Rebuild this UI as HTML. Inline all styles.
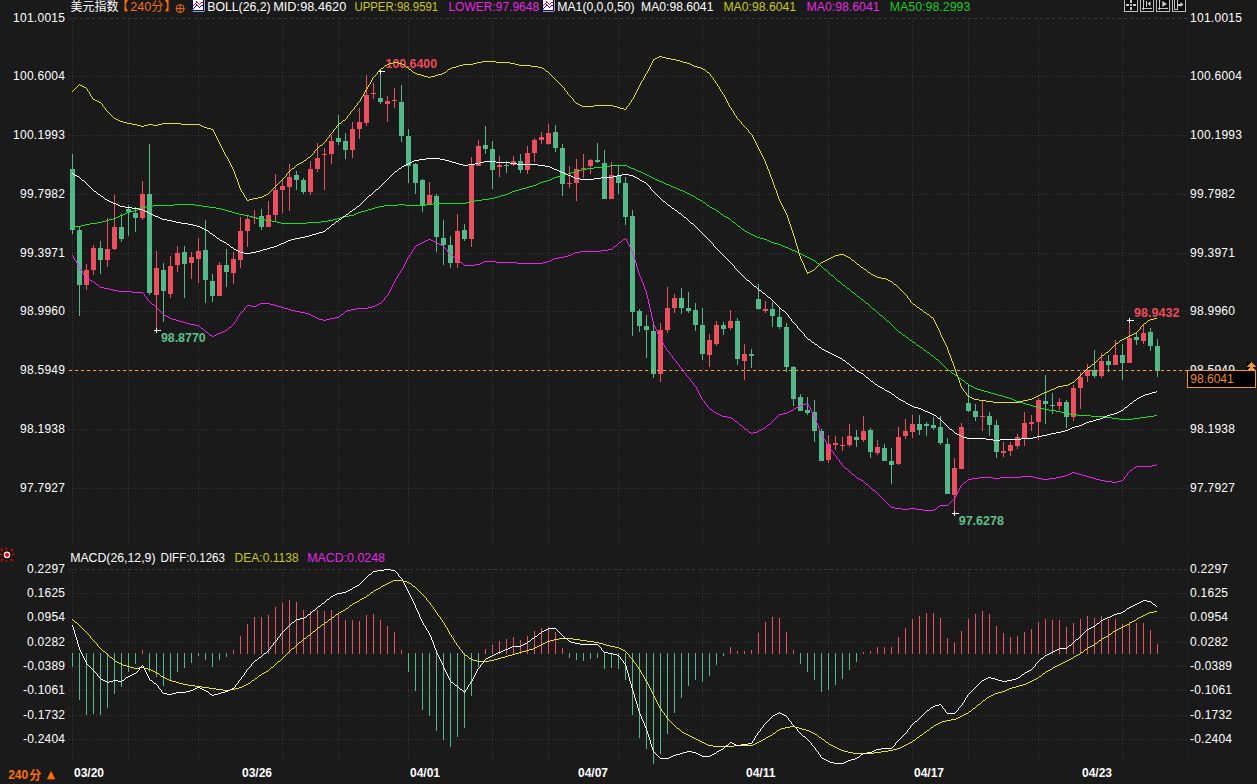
<!DOCTYPE html><html><head><meta charset="utf-8"><title>chart</title><style>html,body{margin:0;padding:0;background:#1a1a1a;overflow:hidden}svg{display:block}text{font-family:"Liberation Sans","Noto Sans CJK SC",sans-serif;font-size:12px;fill:#fff}.b{font-weight:bold}</style></head><body>
<svg width="1257" height="784" viewBox="0 0 1257 784">
<rect width="1257" height="784" fill="#1a1a1a"/>
<rect x="0" y="547" width="1257" height="1" fill="#1e1e1e"/>
<rect x="0" y="764" width="1257" height="1" fill="#1e1e1e"/>
<rect x="68" y="0" width="1" height="764" fill="#1e1e1e"/>
<rect x="1255" y="0" width="1" height="762" fill="#1e1e1e"/>
<line x1="1188.5" x2="1188.5" y1="12" y2="763" stroke="#212121" stroke-dasharray="1 2" shape-rendering="crispEdges"/>
<g stroke="#3a3a3a" stroke-width="1" shape-rendering="crispEdges" fill="none">
<line x1="69" x2="1187" y1="18.5" y2="18.5" stroke-dasharray="3 3" stroke-dashoffset="1"/>
<line x1="69" x2="1187" y1="76.5" y2="76.5" stroke-dasharray="1 2"/>
<line x1="69" x2="1187" y1="135.5" y2="135.5" stroke-dasharray="1 2"/>
<line x1="69" x2="1187" y1="194.5" y2="194.5" stroke-dasharray="1 2"/>
<line x1="69" x2="1187" y1="253.5" y2="253.5" stroke-dasharray="1 2"/>
<line x1="69" x2="1187" y1="311.5" y2="311.5" stroke-dasharray="1 2"/>
<line x1="69" x2="1187" y1="370.5" y2="370.5" stroke-dasharray="1 2"/>
<line x1="69" x2="1187" y1="429.5" y2="429.5" stroke-dasharray="1 2"/>
<line x1="69" x2="1187" y1="488.5" y2="488.5" stroke-dasharray="1 2"/>
<line x1="69" x2="1187" y1="569.5" y2="569.5" stroke-dasharray="3 3" stroke-dashoffset="1"/>
<line x1="69" x2="1187" y1="593.5" y2="593.5" stroke-dasharray="1 2"/>
<line x1="69" x2="1187" y1="617.5" y2="617.5" stroke-dasharray="1 2"/>
<line x1="69" x2="1187" y1="642.5" y2="642.5" stroke-dasharray="1 2"/>
<line x1="69" x2="1187" y1="666.5" y2="666.5" stroke-dasharray="1 2"/>
<line x1="69" x2="1187" y1="690.5" y2="690.5" stroke-dasharray="1 2"/>
<line x1="69" x2="1187" y1="715.5" y2="715.5" stroke-dasharray="1 2"/>
<line x1="69" x2="1187" y1="739.5" y2="739.5" stroke-dasharray="1 2"/>
<line x1="72.5" x2="72.5" y1="18" y2="547" stroke-dasharray="1 2"/>
<line x1="72.5" x2="72.5" y1="569" y2="763" stroke-dasharray="1 2"/>
<line x1="128.5" x2="128.5" y1="18" y2="547" stroke-dasharray="1 2"/>
<line x1="128.5" x2="128.5" y1="569" y2="763" stroke-dasharray="1 2"/>
<line x1="198.5" x2="198.5" y1="18" y2="547" stroke-dasharray="1 2"/>
<line x1="198.5" x2="198.5" y1="569" y2="763" stroke-dasharray="1 2"/>
<line x1="282.5" x2="282.5" y1="18" y2="547" stroke-dasharray="1 2"/>
<line x1="282.5" x2="282.5" y1="569" y2="763" stroke-dasharray="1 2"/>
<line x1="338.5" x2="338.5" y1="18" y2="547" stroke-dasharray="1 2"/>
<line x1="338.5" x2="338.5" y1="569" y2="763" stroke-dasharray="1 2"/>
<line x1="408.5" x2="408.5" y1="18" y2="547" stroke-dasharray="1 2"/>
<line x1="408.5" x2="408.5" y1="569" y2="763" stroke-dasharray="1 2"/>
<line x1="492.5" x2="492.5" y1="18" y2="547" stroke-dasharray="1 2"/>
<line x1="492.5" x2="492.5" y1="569" y2="763" stroke-dasharray="1 2"/>
<line x1="548.5" x2="548.5" y1="18" y2="547" stroke-dasharray="1 2"/>
<line x1="548.5" x2="548.5" y1="569" y2="763" stroke-dasharray="1 2"/>
<line x1="618.5" x2="618.5" y1="18" y2="547" stroke-dasharray="1 2"/>
<line x1="618.5" x2="618.5" y1="569" y2="763" stroke-dasharray="1 2"/>
<line x1="702.5" x2="702.5" y1="18" y2="547" stroke-dasharray="1 2"/>
<line x1="702.5" x2="702.5" y1="569" y2="763" stroke-dasharray="1 2"/>
<line x1="758.5" x2="758.5" y1="18" y2="547" stroke-dasharray="1 2"/>
<line x1="758.5" x2="758.5" y1="569" y2="763" stroke-dasharray="1 2"/>
<line x1="828.5" x2="828.5" y1="18" y2="547" stroke-dasharray="1 2"/>
<line x1="828.5" x2="828.5" y1="569" y2="763" stroke-dasharray="1 2"/>
<line x1="912.5" x2="912.5" y1="18" y2="547" stroke-dasharray="1 2"/>
<line x1="912.5" x2="912.5" y1="569" y2="763" stroke-dasharray="1 2"/>
<line x1="968.5" x2="968.5" y1="18" y2="547" stroke-dasharray="1 2"/>
<line x1="968.5" x2="968.5" y1="569" y2="763" stroke-dasharray="1 2"/>
<line x1="1038.5" x2="1038.5" y1="18" y2="547" stroke-dasharray="1 2"/>
<line x1="1038.5" x2="1038.5" y1="569" y2="763" stroke-dasharray="1 2"/>
<line x1="1122.5" x2="1122.5" y1="18" y2="547" stroke-dasharray="1 2"/>
<line x1="1122.5" x2="1122.5" y1="569" y2="763" stroke-dasharray="1 2"/>
</g>
<g shape-rendering="crispEdges">
<rect x="72.0" y="153.8" width="1" height="80.0" fill="#54b888"/>
<rect x="70.0" y="169.1" width="5" height="60.9" fill="#54b888"/>
<rect x="79.0" y="227.0" width="1" height="88.8" fill="#54b888"/>
<rect x="77.0" y="230.0" width="5" height="55.0" fill="#54b888"/>
<rect x="86.0" y="264.2" width="1" height="25.8" fill="#ec4f5d"/>
<rect x="84.0" y="269.9" width="5" height="15.1" fill="#ec4f5d"/>
<rect x="93.0" y="244.9" width="1" height="30.0" fill="#ec4f5d"/>
<rect x="91.0" y="248.1" width="5" height="22.0" fill="#ec4f5d"/>
<rect x="100.0" y="241.0" width="1" height="33.0" fill="#54b888"/>
<rect x="98.0" y="248.1" width="5" height="11.9" fill="#54b888"/>
<rect x="107.0" y="218.1" width="1" height="48.8" fill="#ec4f5d"/>
<rect x="105.0" y="249.1" width="5" height="10.9" fill="#ec4f5d"/>
<rect x="114.0" y="195.1" width="1" height="54.9" fill="#ec4f5d"/>
<rect x="112.0" y="227.1" width="5" height="22.0" fill="#ec4f5d"/>
<rect x="121.0" y="214.3" width="1" height="27.5" fill="#54b888"/>
<rect x="119.0" y="227.1" width="5" height="11.8" fill="#54b888"/>
<rect x="128.0" y="205.0" width="1" height="30.7" fill="#54b888"/>
<rect x="126.0" y="209.3" width="5" height="3.0" fill="#54b888"/>
<rect x="135.0" y="206.9" width="1" height="25.0" fill="#54b888"/>
<rect x="133.0" y="213.1" width="5" height="5.0" fill="#54b888"/>
<rect x="142.0" y="181.1" width="1" height="38.9" fill="#ec4f5d"/>
<rect x="140.0" y="194.2" width="5" height="23.9" fill="#ec4f5d"/>
<rect x="149.0" y="143.8" width="1" height="151.0" fill="#54b888"/>
<rect x="147.0" y="194.2" width="5" height="99.1" fill="#54b888"/>
<rect x="156.0" y="251.1" width="1" height="79.1" fill="#ec4f5d"/>
<rect x="154.0" y="268.0" width="5" height="26.8" fill="#ec4f5d"/>
<rect x="163.0" y="263.2" width="1" height="58.8" fill="#54b888"/>
<rect x="161.0" y="269.9" width="5" height="21.1" fill="#54b888"/>
<rect x="170.0" y="255.9" width="1" height="42.1" fill="#ec4f5d"/>
<rect x="168.0" y="266.1" width="5" height="27.7" fill="#ec4f5d"/>
<rect x="177.0" y="245.8" width="1" height="26.2" fill="#ec4f5d"/>
<rect x="175.0" y="252.9" width="5" height="12.1" fill="#ec4f5d"/>
<rect x="184.0" y="246.2" width="1" height="51.8" fill="#54b888"/>
<rect x="182.0" y="252.3" width="5" height="11.5" fill="#54b888"/>
<rect x="191.0" y="252.0" width="1" height="27.1" fill="#ec4f5d"/>
<rect x="189.0" y="257.1" width="5" height="6.0" fill="#ec4f5d"/>
<rect x="198.0" y="238.0" width="1" height="45.0" fill="#ec4f5d"/>
<rect x="196.0" y="251.0" width="5" height="8.0" fill="#ec4f5d"/>
<rect x="205.0" y="220.0" width="1" height="83.2" fill="#54b888"/>
<rect x="203.0" y="250.0" width="5" height="29.9" fill="#54b888"/>
<rect x="212.0" y="274.1" width="1" height="27.8" fill="#54b888"/>
<rect x="210.0" y="281.2" width="5" height="14.5" fill="#54b888"/>
<rect x="219.0" y="262.1" width="1" height="33.6" fill="#ec4f5d"/>
<rect x="217.0" y="265.1" width="5" height="30.6" fill="#ec4f5d"/>
<rect x="226.0" y="249.1" width="1" height="37.9" fill="#54b888"/>
<rect x="224.0" y="265.0" width="5" height="7.1" fill="#54b888"/>
<rect x="233.0" y="252.0" width="1" height="31.9" fill="#ec4f5d"/>
<rect x="231.0" y="259.0" width="5" height="14.0" fill="#ec4f5d"/>
<rect x="240.0" y="216.9" width="1" height="50.9" fill="#ec4f5d"/>
<rect x="238.0" y="231.1" width="5" height="28.9" fill="#ec4f5d"/>
<rect x="247.0" y="215.2" width="1" height="32.0" fill="#ec4f5d"/>
<rect x="245.0" y="219.0" width="5" height="12.1" fill="#ec4f5d"/>
<rect x="254.0" y="209.9" width="1" height="14.3" fill="#ec4f5d"/>
<rect x="252.0" y="216.6" width="5" height="1.5" fill="#ec4f5d"/>
<rect x="261.0" y="208.9" width="1" height="21.1" fill="#54b888"/>
<rect x="259.0" y="216.0" width="5" height="11.1" fill="#54b888"/>
<rect x="268.0" y="200.9" width="1" height="26.2" fill="#ec4f5d"/>
<rect x="266.0" y="215.0" width="5" height="12.1" fill="#ec4f5d"/>
<rect x="275.0" y="174.1" width="1" height="46.9" fill="#ec4f5d"/>
<rect x="273.0" y="190.1" width="5" height="24.9" fill="#ec4f5d"/>
<rect x="282.0" y="180.2" width="1" height="32.9" fill="#ec4f5d"/>
<rect x="280.0" y="185.9" width="5" height="4.2" fill="#ec4f5d"/>
<rect x="289.0" y="163.9" width="1" height="47.3" fill="#ec4f5d"/>
<rect x="287.0" y="176.9" width="5" height="10.0" fill="#ec4f5d"/>
<rect x="296.0" y="170.6" width="1" height="19.5" fill="#54b888"/>
<rect x="294.0" y="175.0" width="5" height="4.8" fill="#54b888"/>
<rect x="303.0" y="177.9" width="1" height="16.3" fill="#54b888"/>
<rect x="301.0" y="179.8" width="5" height="11.9" fill="#54b888"/>
<rect x="310.0" y="161.1" width="1" height="33.8" fill="#ec4f5d"/>
<rect x="308.0" y="169.1" width="5" height="23.0" fill="#ec4f5d"/>
<rect x="317.0" y="142.9" width="1" height="29.1" fill="#ec4f5d"/>
<rect x="315.0" y="158.0" width="5" height="11.1" fill="#ec4f5d"/>
<rect x="324.0" y="148.0" width="1" height="42.1" fill="#ec4f5d"/>
<rect x="322.0" y="153.8" width="5" height="1.3" fill="#ec4f5d"/>
<rect x="331.0" y="135.2" width="1" height="28.7" fill="#ec4f5d"/>
<rect x="329.0" y="141.0" width="5" height="13.2" fill="#ec4f5d"/>
<rect x="338.0" y="114.9" width="1" height="30.3" fill="#54b888"/>
<rect x="336.0" y="137.9" width="5" height="4.4" fill="#54b888"/>
<rect x="345.0" y="133.1" width="1" height="25.8" fill="#54b888"/>
<rect x="343.0" y="141.0" width="5" height="9.0" fill="#54b888"/>
<rect x="352.0" y="122.2" width="1" height="35.8" fill="#ec4f5d"/>
<rect x="350.0" y="128.9" width="5" height="21.1" fill="#ec4f5d"/>
<rect x="359.0" y="107.8" width="1" height="31.2" fill="#ec4f5d"/>
<rect x="357.0" y="121.8" width="5" height="7.1" fill="#ec4f5d"/>
<rect x="366.0" y="74.9" width="1" height="51.1" fill="#ec4f5d"/>
<rect x="364.0" y="95.0" width="5" height="28.2" fill="#ec4f5d"/>
<rect x="373.0" y="83.0" width="1" height="16.2" fill="#ec4f5d"/>
<rect x="371.0" y="92.9" width="5" height="1.5" fill="#ec4f5d"/>
<rect x="380.0" y="71.5" width="1" height="32.5" fill="#54b888"/>
<rect x="378.0" y="97.9" width="5" height="4.2" fill="#54b888"/>
<rect x="387.0" y="96.0" width="1" height="26.2" fill="#ec4f5d"/>
<rect x="385.0" y="101.1" width="5" height="2.9" fill="#ec4f5d"/>
<rect x="394.0" y="87.8" width="1" height="20.0" fill="#ec4f5d"/>
<rect x="392.0" y="99.6" width="5" height="1.5" fill="#ec4f5d"/>
<rect x="401.0" y="84.9" width="1" height="57.0" fill="#54b888"/>
<rect x="399.0" y="101.7" width="5" height="34.5" fill="#54b888"/>
<rect x="408.0" y="128.9" width="1" height="54.2" fill="#54b888"/>
<rect x="406.0" y="136.0" width="5" height="29.8" fill="#54b888"/>
<rect x="415.0" y="163.0" width="1" height="31.0" fill="#54b888"/>
<rect x="413.0" y="163.9" width="5" height="19.0" fill="#54b888"/>
<rect x="422.0" y="178.9" width="1" height="33.0" fill="#54b888"/>
<rect x="420.0" y="179.9" width="5" height="25.7" fill="#54b888"/>
<rect x="429.0" y="182.2" width="1" height="22.0" fill="#ec4f5d"/>
<rect x="427.0" y="195.0" width="5" height="9.2" fill="#ec4f5d"/>
<rect x="436.0" y="194.1" width="1" height="58.0" fill="#54b888"/>
<rect x="434.0" y="196.0" width="5" height="40.7" fill="#54b888"/>
<rect x="443.0" y="219.9" width="1" height="45.0" fill="#54b888"/>
<rect x="441.0" y="238.1" width="5" height="6.9" fill="#54b888"/>
<rect x="450.0" y="235.8" width="1" height="32.5" fill="#54b888"/>
<rect x="448.0" y="245.0" width="5" height="18.0" fill="#54b888"/>
<rect x="457.0" y="214.2" width="1" height="53.7" fill="#ec4f5d"/>
<rect x="455.0" y="231.0" width="5" height="32.0" fill="#ec4f5d"/>
<rect x="464.0" y="223.9" width="1" height="17.1" fill="#54b888"/>
<rect x="462.0" y="230.0" width="5" height="9.0" fill="#54b888"/>
<rect x="471.0" y="157.3" width="1" height="89.6" fill="#ec4f5d"/>
<rect x="469.0" y="165.0" width="5" height="74.0" fill="#ec4f5d"/>
<rect x="478.0" y="140.1" width="1" height="25.8" fill="#ec4f5d"/>
<rect x="476.0" y="146.2" width="5" height="19.7" fill="#ec4f5d"/>
<rect x="485.0" y="126.1" width="1" height="28.0" fill="#54b888"/>
<rect x="483.0" y="144.9" width="5" height="4.2" fill="#54b888"/>
<rect x="492.0" y="141.0" width="1" height="47.9" fill="#54b888"/>
<rect x="490.0" y="149.1" width="5" height="21.0" fill="#54b888"/>
<rect x="499.0" y="156.0" width="1" height="21.0" fill="#ec4f5d"/>
<rect x="497.0" y="165.0" width="5" height="1.9" fill="#ec4f5d"/>
<rect x="506.0" y="161.1" width="1" height="11.9" fill="#54b888"/>
<rect x="504.0" y="165.0" width="5" height="1.0" fill="#54b888"/>
<rect x="513.0" y="156.0" width="1" height="9.9" fill="#ec4f5d"/>
<rect x="511.0" y="161.1" width="5" height="4.3" fill="#ec4f5d"/>
<rect x="520.0" y="154.1" width="1" height="18.9" fill="#54b888"/>
<rect x="518.0" y="161.1" width="5" height="9.0" fill="#54b888"/>
<rect x="527.0" y="146.2" width="1" height="27.8" fill="#ec4f5d"/>
<rect x="525.0" y="152.9" width="5" height="17.2" fill="#ec4f5d"/>
<rect x="534.0" y="138.2" width="1" height="23.9" fill="#ec4f5d"/>
<rect x="532.0" y="140.1" width="5" height="12.8" fill="#ec4f5d"/>
<rect x="541.0" y="132.1" width="1" height="11.8" fill="#ec4f5d"/>
<rect x="539.0" y="137.2" width="5" height="2.5" fill="#ec4f5d"/>
<rect x="548.0" y="123.8" width="1" height="21.5" fill="#ec4f5d"/>
<rect x="546.0" y="133.0" width="5" height="10.9" fill="#ec4f5d"/>
<rect x="555.0" y="125.2" width="1" height="26.8" fill="#54b888"/>
<rect x="553.0" y="132.1" width="5" height="16.0" fill="#54b888"/>
<rect x="562.0" y="143.9" width="1" height="52.1" fill="#54b888"/>
<rect x="560.0" y="148.1" width="5" height="36.0" fill="#54b888"/>
<rect x="569.0" y="165.9" width="1" height="22.0" fill="#ec4f5d"/>
<rect x="567.0" y="182.8" width="5" height="1.3" fill="#ec4f5d"/>
<rect x="576.0" y="158.9" width="1" height="42.1" fill="#ec4f5d"/>
<rect x="574.0" y="169.2" width="5" height="13.6" fill="#ec4f5d"/>
<rect x="583.0" y="154.1" width="1" height="23.9" fill="#ec4f5d"/>
<rect x="581.0" y="167.8" width="5" height="1.4" fill="#ec4f5d"/>
<rect x="590.0" y="158.9" width="1" height="15.1" fill="#ec4f5d"/>
<rect x="588.0" y="159.8" width="5" height="6.1" fill="#ec4f5d"/>
<rect x="597.0" y="143.0" width="1" height="20.1" fill="#54b888"/>
<rect x="595.0" y="159.8" width="5" height="2.3" fill="#54b888"/>
<rect x="604.0" y="150.0" width="1" height="48.9" fill="#54b888"/>
<rect x="602.0" y="163.1" width="5" height="35.8" fill="#54b888"/>
<rect x="611.0" y="162.1" width="1" height="36.8" fill="#ec4f5d"/>
<rect x="609.0" y="174.9" width="5" height="24.0" fill="#ec4f5d"/>
<rect x="618.0" y="165.0" width="1" height="29.1" fill="#54b888"/>
<rect x="616.0" y="175.5" width="5" height="7.3" fill="#54b888"/>
<rect x="625.0" y="177.0" width="1" height="47.9" fill="#54b888"/>
<rect x="623.0" y="182.8" width="5" height="34.2" fill="#54b888"/>
<rect x="632.0" y="210.0" width="1" height="125.9" fill="#54b888"/>
<rect x="630.0" y="215.9" width="5" height="96.1" fill="#54b888"/>
<rect x="639.0" y="309.1" width="1" height="22.9" fill="#54b888"/>
<rect x="637.0" y="311.0" width="5" height="14.9" fill="#54b888"/>
<rect x="646.0" y="314.8" width="1" height="43.1" fill="#54b888"/>
<rect x="644.0" y="325.9" width="5" height="4.0" fill="#54b888"/>
<rect x="653.0" y="324.0" width="1" height="54.0" fill="#54b888"/>
<rect x="651.0" y="331.1" width="5" height="42.7" fill="#54b888"/>
<rect x="660.0" y="323.0" width="1" height="58.9" fill="#ec4f5d"/>
<rect x="658.0" y="330.2" width="5" height="43.6" fill="#ec4f5d"/>
<rect x="667.0" y="287.1" width="1" height="45.7" fill="#ec4f5d"/>
<rect x="665.0" y="308.1" width="5" height="21.9" fill="#ec4f5d"/>
<rect x="674.0" y="293.8" width="1" height="19.1" fill="#ec4f5d"/>
<rect x="672.0" y="298.0" width="5" height="10.1" fill="#ec4f5d"/>
<rect x="681.0" y="288.0" width="1" height="26.3" fill="#54b888"/>
<rect x="679.0" y="298.0" width="5" height="10.1" fill="#54b888"/>
<rect x="688.0" y="291.9" width="1" height="21.0" fill="#54b888"/>
<rect x="686.0" y="308.1" width="5" height="2.9" fill="#54b888"/>
<rect x="695.0" y="303.0" width="1" height="28.1" fill="#54b888"/>
<rect x="693.0" y="310.0" width="5" height="15.0" fill="#54b888"/>
<rect x="702.0" y="308.1" width="1" height="51.8" fill="#54b888"/>
<rect x="700.0" y="325.0" width="5" height="29.1" fill="#54b888"/>
<rect x="709.0" y="334.0" width="1" height="32.9" fill="#ec4f5d"/>
<rect x="707.0" y="340.1" width="5" height="15.0" fill="#ec4f5d"/>
<rect x="716.0" y="321.0" width="1" height="24.9" fill="#ec4f5d"/>
<rect x="714.0" y="325.0" width="5" height="19.0" fill="#ec4f5d"/>
<rect x="723.0" y="322.0" width="1" height="13.0" fill="#54b888"/>
<rect x="721.0" y="325.0" width="5" height="4.0" fill="#54b888"/>
<rect x="730.0" y="310.0" width="1" height="20.1" fill="#ec4f5d"/>
<rect x="728.0" y="321.0" width="5" height="7.2" fill="#ec4f5d"/>
<rect x="737.0" y="318.1" width="1" height="46.9" fill="#54b888"/>
<rect x="735.0" y="320.8" width="5" height="38.1" fill="#54b888"/>
<rect x="744.0" y="344.2" width="1" height="35.8" fill="#ec4f5d"/>
<rect x="742.0" y="354.1" width="5" height="6.7" fill="#ec4f5d"/>
<rect x="751.0" y="348.9" width="1" height="19.2" fill="#54b888"/>
<rect x="749.0" y="354.1" width="5" height="1.9" fill="#54b888"/>
<rect x="758.0" y="283.8" width="1" height="26.2" fill="#54b888"/>
<rect x="756.0" y="298.9" width="5" height="10.2" fill="#54b888"/>
<rect x="765.0" y="301.0" width="1" height="11.9" fill="#ec4f5d"/>
<rect x="763.0" y="309.1" width="5" height="1.9" fill="#ec4f5d"/>
<rect x="772.0" y="302.0" width="1" height="24.9" fill="#54b888"/>
<rect x="770.0" y="309.1" width="5" height="7.1" fill="#54b888"/>
<rect x="779.0" y="307.2" width="1" height="22.0" fill="#54b888"/>
<rect x="777.0" y="317.1" width="5" height="9.8" fill="#54b888"/>
<rect x="786.0" y="323.0" width="1" height="48.9" fill="#54b888"/>
<rect x="784.0" y="326.9" width="5" height="40.0" fill="#54b888"/>
<rect x="793.0" y="366.0" width="1" height="40.2" fill="#54b888"/>
<rect x="791.0" y="366.9" width="5" height="32.2" fill="#54b888"/>
<rect x="800.0" y="393.9" width="1" height="17.1" fill="#54b888"/>
<rect x="798.0" y="397.2" width="5" height="13.8" fill="#54b888"/>
<rect x="807.0" y="397.2" width="1" height="17.8" fill="#54b888"/>
<rect x="805.0" y="410.0" width="5" height="3.1" fill="#54b888"/>
<rect x="814.0" y="399.7" width="1" height="42.5" fill="#54b888"/>
<rect x="812.0" y="412.0" width="5" height="19.1" fill="#54b888"/>
<rect x="821.0" y="428.8" width="1" height="32.2" fill="#54b888"/>
<rect x="819.0" y="430.7" width="5" height="30.3" fill="#54b888"/>
<rect x="828.0" y="434.9" width="1" height="28.0" fill="#ec4f5d"/>
<rect x="826.0" y="444.1" width="5" height="15.9" fill="#ec4f5d"/>
<rect x="835.0" y="435.9" width="1" height="14.0" fill="#ec4f5d"/>
<rect x="833.0" y="443.2" width="5" height="1.9" fill="#ec4f5d"/>
<rect x="842.0" y="437.0" width="1" height="14.2" fill="#ec4f5d"/>
<rect x="840.0" y="445.1" width="5" height="1.0" fill="#ec4f5d"/>
<rect x="849.0" y="424.0" width="1" height="23.0" fill="#ec4f5d"/>
<rect x="847.0" y="436.1" width="5" height="9.0" fill="#ec4f5d"/>
<rect x="856.0" y="430.1" width="1" height="16.9" fill="#54b888"/>
<rect x="854.0" y="437.0" width="5" height="2.9" fill="#54b888"/>
<rect x="863.0" y="416.0" width="1" height="26.2" fill="#ec4f5d"/>
<rect x="861.0" y="431.1" width="5" height="8.8" fill="#ec4f5d"/>
<rect x="870.0" y="427.8" width="1" height="30.3" fill="#54b888"/>
<rect x="868.0" y="430.1" width="5" height="22.1" fill="#54b888"/>
<rect x="877.0" y="439.9" width="1" height="15.1" fill="#ec4f5d"/>
<rect x="875.0" y="447.0" width="5" height="6.1" fill="#ec4f5d"/>
<rect x="884.0" y="444.1" width="1" height="16.9" fill="#54b888"/>
<rect x="882.0" y="447.9" width="5" height="13.1" fill="#54b888"/>
<rect x="891.0" y="447.9" width="1" height="36.0" fill="#54b888"/>
<rect x="889.0" y="461.0" width="5" height="4.2" fill="#54b888"/>
<rect x="898.0" y="426.9" width="1" height="38.3" fill="#ec4f5d"/>
<rect x="896.0" y="437.0" width="5" height="26.8" fill="#ec4f5d"/>
<rect x="905.0" y="418.9" width="1" height="20.0" fill="#ec4f5d"/>
<rect x="903.0" y="431.1" width="5" height="5.0" fill="#ec4f5d"/>
<rect x="912.0" y="415.0" width="1" height="23.0" fill="#ec4f5d"/>
<rect x="910.0" y="424.0" width="5" height="8.1" fill="#ec4f5d"/>
<rect x="919.0" y="415.0" width="1" height="19.9" fill="#54b888"/>
<rect x="917.0" y="424.0" width="5" height="6.1" fill="#54b888"/>
<rect x="926.0" y="421.7" width="1" height="14.2" fill="#54b888"/>
<rect x="924.0" y="424.0" width="5" height="1.9" fill="#54b888"/>
<rect x="933.0" y="416.9" width="1" height="13.2" fill="#54b888"/>
<rect x="931.0" y="425.0" width="5" height="2.8" fill="#54b888"/>
<rect x="940.0" y="416.0" width="1" height="29.1" fill="#54b888"/>
<rect x="938.0" y="426.9" width="5" height="16.3" fill="#54b888"/>
<rect x="947.0" y="438.0" width="1" height="56.3" fill="#54b888"/>
<rect x="945.0" y="444.1" width="5" height="50.2" fill="#54b888"/>
<rect x="954.0" y="458.1" width="1" height="55.3" fill="#ec4f5d"/>
<rect x="952.0" y="468.0" width="5" height="26.8" fill="#ec4f5d"/>
<rect x="961.0" y="423.1" width="1" height="45.9" fill="#ec4f5d"/>
<rect x="959.0" y="426.9" width="5" height="42.1" fill="#ec4f5d"/>
<rect x="968.0" y="385.2" width="1" height="26.8" fill="#54b888"/>
<rect x="966.0" y="403.0" width="5" height="8.0" fill="#54b888"/>
<rect x="975.0" y="403.9" width="1" height="17.2" fill="#54b888"/>
<rect x="973.0" y="411.0" width="5" height="5.9" fill="#54b888"/>
<rect x="982.0" y="401.1" width="1" height="30.0" fill="#ec4f5d"/>
<rect x="980.0" y="415.8" width="5" height="1.1" fill="#ec4f5d"/>
<rect x="989.0" y="412.0" width="1" height="23.9" fill="#54b888"/>
<rect x="987.0" y="416.0" width="5" height="9.0" fill="#54b888"/>
<rect x="996.0" y="420.2" width="1" height="37.9" fill="#54b888"/>
<rect x="994.0" y="425.0" width="5" height="27.2" fill="#54b888"/>
<rect x="1003.0" y="442.2" width="1" height="14.7" fill="#ec4f5d"/>
<rect x="1001.0" y="450.8" width="5" height="2.3" fill="#ec4f5d"/>
<rect x="1010.0" y="442.2" width="1" height="13.8" fill="#ec4f5d"/>
<rect x="1008.0" y="445.1" width="5" height="6.1" fill="#ec4f5d"/>
<rect x="1017.0" y="434.2" width="1" height="14.7" fill="#ec4f5d"/>
<rect x="1015.0" y="437.0" width="5" height="9.0" fill="#ec4f5d"/>
<rect x="1024.0" y="412.0" width="1" height="33.8" fill="#ec4f5d"/>
<rect x="1022.0" y="423.1" width="5" height="15.0" fill="#ec4f5d"/>
<rect x="1031.0" y="414.8" width="1" height="16.3" fill="#ec4f5d"/>
<rect x="1029.0" y="421.9" width="5" height="2.1" fill="#ec4f5d"/>
<rect x="1038.0" y="398.0" width="1" height="41.7" fill="#ec4f5d"/>
<rect x="1036.0" y="399.9" width="5" height="22.0" fill="#ec4f5d"/>
<rect x="1045.0" y="375.0" width="1" height="49.0" fill="#54b888"/>
<rect x="1043.0" y="401.1" width="5" height="2.8" fill="#54b888"/>
<rect x="1052.0" y="393.2" width="1" height="21.1" fill="#54b888"/>
<rect x="1050.0" y="404.9" width="5" height="1.3" fill="#54b888"/>
<rect x="1059.0" y="398.0" width="1" height="12.0" fill="#ec4f5d"/>
<rect x="1057.0" y="402.0" width="5" height="4.2" fill="#ec4f5d"/>
<rect x="1066.0" y="399.9" width="1" height="27.9" fill="#54b888"/>
<rect x="1064.0" y="402.0" width="5" height="15.1" fill="#54b888"/>
<rect x="1073.0" y="385.2" width="1" height="35.8" fill="#ec4f5d"/>
<rect x="1071.0" y="388.0" width="5" height="29.1" fill="#ec4f5d"/>
<rect x="1080.0" y="372.2" width="1" height="36.9" fill="#ec4f5d"/>
<rect x="1078.0" y="376.9" width="5" height="11.1" fill="#ec4f5d"/>
<rect x="1087.0" y="364.1" width="1" height="17.8" fill="#ec4f5d"/>
<rect x="1085.0" y="369.9" width="5" height="6.1" fill="#ec4f5d"/>
<rect x="1094.0" y="350.1" width="1" height="28.0" fill="#54b888"/>
<rect x="1092.0" y="370.2" width="5" height="5.8" fill="#54b888"/>
<rect x="1101.0" y="353.0" width="1" height="25.1" fill="#ec4f5d"/>
<rect x="1099.0" y="360.9" width="5" height="15.1" fill="#ec4f5d"/>
<rect x="1108.0" y="355.1" width="1" height="17.1" fill="#54b888"/>
<rect x="1106.0" y="360.9" width="5" height="4.2" fill="#54b888"/>
<rect x="1115.0" y="340.2" width="1" height="24.9" fill="#ec4f5d"/>
<rect x="1113.0" y="355.1" width="5" height="10.0" fill="#ec4f5d"/>
<rect x="1122.0" y="344.0" width="1" height="36.0" fill="#54b888"/>
<rect x="1120.0" y="355.1" width="5" height="7.7" fill="#54b888"/>
<rect x="1129.0" y="320.1" width="1" height="42.7" fill="#ec4f5d"/>
<rect x="1127.0" y="337.9" width="5" height="24.9" fill="#ec4f5d"/>
<rect x="1136.0" y="332.9" width="1" height="12.1" fill="#54b888"/>
<rect x="1134.0" y="336.9" width="5" height="3.3" fill="#54b888"/>
<rect x="1143.0" y="323.9" width="1" height="20.1" fill="#ec4f5d"/>
<rect x="1141.0" y="332.9" width="5" height="8.2" fill="#ec4f5d"/>
<rect x="1150.0" y="328.1" width="1" height="23.0" fill="#54b888"/>
<rect x="1148.0" y="332.0" width="5" height="13.9" fill="#54b888"/>
<rect x="1157.0" y="338.9" width="1" height="38.0" fill="#54b888"/>
<rect x="1155.0" y="345.9" width="5" height="24.9" fill="#54b888"/>
</g>
<line x1="69" x2="1187" y1="370.5" y2="370.5" stroke="#ffa032" stroke-width="1" stroke-dasharray="3 3" shape-rendering="crispEdges"/>
<path d="M378.0 71.5H385.0M380.5 69.0V74.0" stroke="#fff" stroke-width="1" shape-rendering="crispEdges" fill="none"/>
<text x="385.5" y="68" textLength="51.6" lengthAdjust="spacingAndGlyphs" class="b" style="fill:#ee4a5c">100.6400</text>
<path d="M154.0 330.5H161.0M156.5 328.0V333.0" stroke="#fff" stroke-width="1" shape-rendering="crispEdges" fill="none"/>
<text x="160.9" y="342" textLength="44.8" lengthAdjust="spacingAndGlyphs" class="b" style="fill:#5ac08c">98.8770</text>
<path d="M952.0 513.5H959.0M954.5 511.0V516.0" stroke="#fff" stroke-width="1" shape-rendering="crispEdges" fill="none"/>
<text x="958.7" y="525" textLength="45.3" lengthAdjust="spacingAndGlyphs" class="b" style="fill:#5ac08c">97.6278</text>
<path d="M1127.0 320.5H1134.0M1129.5 318.0V323.0" stroke="#fff" stroke-width="1" shape-rendering="crispEdges" fill="none"/>
<text x="1134.1" y="317" textLength="45.3" lengthAdjust="spacingAndGlyphs" class="b" style="fill:#ee4a5c">98.9432</text>
<path d="M72 226.5h7M79 226.5h2M81 225.5h4M85 224.5h1M86 224.5h4M90 223.5h3M93 223.5h4M97 222.5h3M100 222.5h2M102 221.5h4M106 220.5h1M107 220.5h2M109 219.5h4M113 218.5h1M114 218.5h2M116 217.5h2M118 216.5h2M120 215.5h1M121 215.5h2M123 214.5h2M125 213.5h2M127 212.5h1M128 212.5h2M130 211.5h4M134 210.5h1M135 210.5h2M137 209.5h2M139 208.5h2M141 207.5h1M142 207.5h4M146 206.5h3M149 206.5h4M153 205.5h3M156 205.5h7M163 205.5h7M170 205.5h4M174 204.5h3M177 204.5h7M184 204.5h7M191 204.5h4M195 205.5h3M198 205.5h4M202 206.5h3M205 206.5h4M209 207.5h3M212 207.5h4M216 208.5h3M219 208.5h2M221 209.5h4M225 210.5h1M226 210.5h2M228 211.5h4M232 212.5h1M233 212.5h2M235 213.5h4M239 214.5h1M240 214.5h4M244 215.5h3M247 215.5h2M249 216.5h4M253 217.5h1M254 217.5h2M256 218.5h4M260 219.5h1M261 219.5h4M265 220.5h3M268 220.5h4M272 221.5h3M275 221.5h2M277 222.5h4M281 223.5h1M282 223.5h7M289 223.5h7M296 223.5h7M303 223.5h4M307 222.5h3M310 222.5h7M317 222.5h4M321 221.5h3M324 221.5h4M328 220.5h3M331 220.5h2M333 219.5h4M337 218.5h1M338 218.5h2M340 217.5h4M344 216.5h1M345 216.5h4M349 215.5h3M352 215.5h2M354 214.5h2M356 213.5h2M358 212.5h1M359 212.5h2M361 211.5h4M365 210.5h1M366 210.5h2M368 209.5h4M372 208.5h1M373 208.5h2M375 207.5h4M379 206.5h1M380 206.5h4M384 205.5h3M387 205.5h7M394 205.5h4M398 204.5h3M401 204.5h4M405 205.5h3M408 205.5h7M415 205.5h7M422 205.5h4M426 204.5h3M429 204.5h4M433 203.5h3M436 203.5h7M443 203.5h7M450 203.5h7M457 203.5h7M464 203.5h2M466 202.5h4M470 201.5h1M471 201.5h4M475 200.5h3M478 200.5h4M482 199.5h3M485 199.5h4M489 198.5h3M492 198.5h2M494 197.5h4M498 196.5h1M499 196.5h2M501 195.5h4M505 194.5h1M506 194.5h2M508 193.5h2M510 192.5h2M512 191.5h1M513 191.5h2M515 190.5h4M519 189.5h1M520 189.5h2M522 188.5h4M526 187.5h1M527 187.5h2M529 186.5h4M533 185.5h1M534 185.5h2M536 184.5h2M538 183.5h2M540 182.5h1M541 182.5h2M543 181.5h4M547 180.5h1M548 180.5h2M550 179.5h2M552 178.5h2M554 177.5h1M555 177.5h2M557 176.5h4M561 175.5h1M562 175.5h2M564 174.5h4M568 173.5h1M569 173.5h2M571 172.5h4M575 171.5h1M576 171.5h2M578 170.5h4M582 169.5h1M583 169.5h4M587 168.5h3M590 168.5h4M594 167.5h3M597 167.5h7M604 167.5h2M606 166.5h4M610 165.5h1M611 165.5h7M618 165.5h7M625 165.5h2M627 166.5h2M629 167.5h2M631 168.5h1M632 168.5h2M634 169.5h2M636 170.5h2M638 171.5h1M639 171.5h2M641 172.5h2M643 173.5h2M645 174.5h1M646 174.5h1M647 175.5h2M649 176.5h2M651 177.5h2M653 178.5h2M655 179.5h2M657 180.5h2M659 181.5h1M660 181.5h2M662 182.5h2M664 183.5h2M666 184.5h1M667 184.5h2M669 185.5h2M671 186.5h2M673 187.5h1M674 187.5h2M676 188.5h2M678 189.5h2M680 190.5h1M681 190.5h2M683 191.5h2M685 192.5h2M687 193.5h1M688 193.5h1M689 194.5h2M691 195.5h2M693 196.5h2M695 197.5h1M696 198.5h2M698 199.5h2M700 200.5h2M702 201.5h1M703 202.5h2M705 203.5h1M706 204.5h1M707 205.5h2M709 206.5h1M710 207.5h2M712 208.5h2M714 209.5h2M716 210.5h1M717 211.5h2M719 212.5h1M720 213.5h1M721 214.5h2M723 215.5h1M724 216.5h2M726 217.5h2M728 218.5h2M730 219.5h1M731 220.5h1M732 221.5h1M733 222.5h2M735 223.5h1M736 224.5h1M737 225.5h1M738 226.5h2M740 227.5h1M741 228.5h1M742 229.5h2M744 230.5h1M745 231.5h2M747 232.5h2M749 233.5h2M751 234.5h2M753 235.5h2M755 236.5h2M757 237.5h1M758 237.5h2M760 238.5h4M764 239.5h1M765 239.5h2M767 240.5h2M769 241.5h2M771 242.5h1M772 242.5h2M774 243.5h4M778 244.5h1M779 244.5h2M781 245.5h2M783 246.5h2M785 247.5h1M786 247.5h2M788 248.5h2M790 249.5h2M792 250.5h1M793 250.5h2M795 251.5h2M797 252.5h2M799 253.5h1M800 253.5h1M801 254.5h2M803 255.5h2M805 256.5h2M807 257.5h2M809 258.5h2M811 259.5h2M813 260.5h1M814 260.5h1M815 261.5h1M816 262.5h1M817 263.5h2M819 264.5h1M820 265.5h1M821 266.5h1M822 267.5h1M823 268.5h1M824 269.5h2M826 270.5h1M827 271.5h1M828 272.5h1M829 273.5h1M830 274.5h1M831 275.5h2M833 276.5h1M834 277.5h1M835 278.5h1M836 279.5h1M837 280.5h1M838 281.5h2M840 282.5h1M841 283.5h1M842 284.5h1M843 285.5h2M845 286.5h1M846 287.5h1M847 288.5h2M849 289.5h1M850 290.5h1M851 291.5h1M852 292.5h2M854 293.5h1M855 294.5h1M856 295.5h1M857 296.5h2M859 297.5h1M860 298.5h1M861 299.5h2M863 300.5h1M864 301.5h1M865 302.5h1M866 303.5h2M868 304.5h1M869 305.5h1M870 306.5h1M871 307.5h1M872 308.5h1M873 309.5h2M875 310.5h1M876 311.5h1M877 312.5h1M878 313.5h1M879 314.5h1M880 315.5h2M882 316.5h1M883 317.5h1M884 318.5h1M885 319.5h1M886 320.5h1M887 321.5h2M889 322.5h1M890 323.5h1M891 324.5h1M892 325.5h1M893 326.5h1M894 327.5h1M895 328.5h1M896 329.5h1M897 330.5h1M898 331.5h1M899 332.5h2M901 333.5h1M902 334.5h1M903 335.5h2M905 336.5h1M906 337.5h2M908 338.5h1M909 339.5h1M910 340.5h2M912 341.5h1M913 342.5h2M915 343.5h1M916 344.5h1M917 345.5h2M919 346.5h1M920 347.5h2M922 348.5h1M923 349.5h1M924 350.5h2M926 351.5h1M927 352.5h2M929 353.5h1M930 354.5h1M931 355.5h2M933 356.5h1M934 357.5h1M935 358.5h1M936 359.5h2M938 360.5h1M939 361.5h1M940 362.5h1M941 363.5h1M942 364.5h1M943 365.5h1M944 366.5h1M945 367.5h1M946 368.5h1M947 369.5h1M948 370.5h2M950 371.5h1M951 372.5h1M952 373.5h2M954 374.5h1M955 375.5h2M957 376.5h1M958 377.5h1M959 378.5h2M961 379.5h1M962 380.5h2M964 381.5h1M965 382.5h1M966 383.5h2M968 384.5h1M969 385.5h2M971 386.5h2M973 387.5h2M975 388.5h2M977 389.5h4M981 390.5h1M982 390.5h2M984 391.5h4M988 392.5h1M989 392.5h2M991 393.5h4M995 394.5h1M996 394.5h2M998 395.5h4M1002 396.5h1M1003 396.5h2M1005 397.5h4M1009 398.5h1M1010 398.5h2M1012 399.5h2M1014 400.5h2M1016 401.5h1M1017 401.5h2M1019 402.5h4M1023 403.5h1M1024 403.5h2M1026 404.5h4M1030 405.5h1M1031 405.5h2M1033 406.5h4M1037 407.5h1M1038 407.5h2M1040 408.5h4M1044 409.5h1M1045 409.5h4M1049 410.5h3M1052 410.5h4M1056 411.5h3M1059 411.5h2M1061 412.5h4M1065 413.5h1M1066 413.5h4M1070 414.5h3M1073 414.5h4M1077 415.5h3M1080 415.5h7M1087 415.5h4M1091 416.5h3M1094 416.5h7M1101 416.5h4M1105 417.5h3M1108 417.5h4M1112 418.5h3M1115 418.5h4M1119 419.5h3M1122 419.5h7M1129 419.5h4M1133 418.5h3M1136 418.5h4M1140 417.5h3M1143 417.5h4M1147 416.5h3M1150 416.5h4M1154 415.5h3" fill="none" stroke="#1ee023" stroke-width="1" shape-rendering="crispEdges"/>
<path d="M72 91.5h1M73 90.5h1M74 89.5h1M75 88.5h1M76 87.5h1M77 86.5h1M78 85.5h1M79 84.5h1M80 85.5h2M82 86.5h2M84 87.5h2M86.5 88v1M87.5 89v2M88.5 91v1M89.5 92v2M90.5 94v2M91.5 96v1M92.5 97v2M93 99.5h2M95 100.5h2M97 101.5h2M99 102.5h1M100.5 102v1M101.5 103v1M102.5 104v2M103.5 106v1M104.5 107v1M105.5 108v2M106.5 110v1M107 111.5h1M108 112.5h1M109 113.5h1M110 114.5h1M111 115.5h1M112 116.5h1M113 117.5h1M114 118.5h2M116 119.5h2M118 120.5h2M120 121.5h1M121 121.5h2M123 122.5h4M127 123.5h1M128 123.5h4M132 124.5h3M135 124.5h2M137 125.5h4M141 126.5h1M142 126.5h2M144 125.5h4M148 124.5h1M149 124.5h4M153 125.5h3M156 125.5h2M158 124.5h4M162 123.5h1M163 123.5h7M170 123.5h7M177 123.5h4M181 124.5h3M184 124.5h7M191 124.5h7M198 124.5h2M200 125.5h2M202 126.5h2M204 127.5h1M205 127.5h2M207 128.5h4M211 129.5h1M212.5 129v1M213.5 130v2M214.5 132v2M215.5 134v2M216.5 136v2M217.5 138v2M218.5 140v2M219.5 142v1M219.5 143v1M220.5 144v2M221.5 146v2M222.5 148v2M223.5 150v2M224.5 152v2M225.5 154v2M226.5 156v1M227.5 157v2M228.5 159v2M229.5 161v2M230.5 163v2M231.5 165v2M232.5 167v2M233.5 169v2M234.5 171v3M235.5 174v3M236.5 177v2M237.5 179v3M238.5 182v3M239.5 185v3M240.5 188v1M240.5 189v1M241.5 190v2M242.5 192v1M243.5 193v2M244.5 195v2M245.5 197v1M246.5 198v2M247 200.5h2M249 199.5h4M253 198.5h1M254 198.5h4M258 197.5h3M261 197.5h1M262 196.5h2M264 195.5h2M266 194.5h2M268 193.5h1M269 192.5h1M270 191.5h1M271 190.5h1M272 189.5h1M273 188.5h1M274 187.5h1M275 186.5h1M276 185.5h1M277 184.5h1M278 183.5h1M279 182.5h1M280 181.5h1M281 180.5h1M282.5 179v1M283.5 178v1M284.5 177v1M285.5 176v1M286.5 174v2M287.5 173v1M288.5 172v1M289 171.5h1M290 170.5h1M291 169.5h1M292 168.5h2M294 167.5h1M295 166.5h1M296 165.5h1M297 164.5h2M299 163.5h2M301 162.5h2M303 161.5h1M304 160.5h2M306 159.5h1M307 158.5h1M308 157.5h2M310.5 156v1M311.5 155v1M312.5 154v1M313.5 153v1M314.5 151v2M315.5 150v1M316.5 149v1M317 148.5h1M318 147.5h1M319 146.5h1M320 145.5h2M322 144.5h1M323 143.5h1M324.5 142v1M325.5 141v1M326.5 139v2M327.5 138v1M328.5 137v1M329.5 135v2M330.5 134v1M331.5 133v1M332.5 132v1M333.5 130v2M334.5 129v1M335.5 128v1M336.5 126v2M337.5 125v1M338 124.5h1M339 123.5h2M341 122.5h1M342 121.5h1M343 120.5h2M345.5 119v1M346.5 118v1M347.5 116v2M348.5 115v1M349.5 114v1M350.5 112v2M351.5 111v1M352.5 110v1M353.5 109v1M354.5 107v2M355.5 106v1M356.5 105v1M357.5 103v2M358.5 102v1M359.5 101v1M360.5 99v2M361.5 97v2M362.5 96v1M363.5 94v2M364.5 92v2M365.5 90v2M366.5 89v1M367.5 87v2M368.5 85v2M369.5 84v1M370.5 82v2M371.5 80v2M372.5 78v2M373.5 77v1M374.5 76v1M375.5 75v1M376.5 74v1M377.5 72v2M378.5 71v1M379.5 70v1M380 69.5h1M381 68.5h2M383 67.5h1M384 66.5h1M385 65.5h2M387 64.5h2M389 63.5h4M393 62.5h1M394 62.5h4M398 63.5h3M401 63.5h1M402 64.5h2M404 65.5h1M405 66.5h1M406 67.5h2M408 68.5h1M409 69.5h2M411 70.5h1M412 71.5h1M413 72.5h2M415 73.5h2M417 74.5h4M421 75.5h1M422 75.5h2M424 76.5h4M428 77.5h1M429 77.5h2M431 76.5h4M435 75.5h1M436 75.5h2M438 74.5h4M442 73.5h1M443 73.5h1M444 72.5h2M446 71.5h1M447 70.5h1M448 69.5h2M450 68.5h2M452 67.5h4M456 66.5h1M457 66.5h2M459 65.5h4M463 64.5h1M464 64.5h7M471 64.5h2M473 63.5h4M477 62.5h1M478 62.5h4M482 61.5h3M485 61.5h7M492 61.5h4M496 62.5h3M499 62.5h7M506 62.5h4M510 63.5h3M513 63.5h2M515 64.5h4M519 65.5h1M520 65.5h7M527 65.5h4M531 66.5h3M534 66.5h4M538 67.5h3M541 67.5h1M542 68.5h2M544 69.5h1M545 70.5h1M546 71.5h2M548 72.5h1M549 73.5h1M550 74.5h1M551 75.5h1M552 76.5h1M553 77.5h1M554 78.5h1M555 79.5h1M556 80.5h1M557 81.5h1M558 82.5h1M559 83.5h1M560 84.5h1M561 85.5h1M562.5 86v1M563.5 87v1M564.5 88v2M565.5 90v1M566.5 91v1M567.5 92v2M568.5 94v1M569.5 95v1M570.5 96v1M571.5 97v1M572.5 98v1M573.5 99v2M574.5 101v1M575.5 102v1M576 103.5h2M578 104.5h2M580 105.5h2M582 106.5h1M583 106.5h7M590 106.5h4M594 105.5h3M597 105.5h7M604 105.5h7M611 105.5h2M613 106.5h4M617 107.5h1M618 107.5h2M620 108.5h4M624 109.5h1M625.5 109v1M626.5 107v2M627.5 106v1M628.5 105v1M629.5 103v2M630.5 102v1M631.5 100v2M632.5 99v1M633.5 97v2M634.5 95v2M635.5 93v2M636.5 91v2M637.5 89v2M638.5 87v2M639.5 86v1M639.5 85v1M640.5 83v2M641.5 81v2M642.5 80v1M643.5 78v2M644.5 76v2M645.5 74v2M646.5 73v1M647.5 71v2M648.5 69v2M649.5 67v2M650.5 65v2M651.5 63v2M652.5 61v2M653.5 60v1M653 59.5h2M655 58.5h2M657 57.5h2M659 56.5h1M660 56.5h2M662 57.5h4M666 58.5h1M667 58.5h4M671 59.5h3M674 59.5h2M676 60.5h4M680 61.5h1M681 61.5h2M683 62.5h4M687 63.5h1M688 63.5h2M690 64.5h2M692 65.5h2M694 66.5h1M695 66.5h2M697 67.5h4M701 68.5h1M702 68.5h1M703 69.5h2M705 70.5h1M706 71.5h1M707 72.5h2M709.5 73v1M710.5 74v2M711.5 76v1M712.5 77v1M713.5 78v2M714.5 80v1M715.5 81v2M716.5 83v1M717.5 84v2M718.5 86v1M719.5 87v2M720.5 89v2M721.5 91v1M722.5 92v2M723.5 94v1M724.5 95v2M725.5 97v2M726.5 99v2M727.5 101v2M728.5 103v2M729.5 105v2M730.5 107v1M731.5 108v2M732.5 110v1M733.5 111v2M734.5 113v2M735.5 115v1M736.5 116v2M737.5 118v1M738.5 119v1M739.5 120v1M740.5 121v1M741.5 122v2M742.5 124v1M743.5 125v1M744.5 126v1M745.5 127v1M746.5 128v1M747.5 129v1M748.5 130v2M749.5 132v1M750.5 133v1M751.5 134v1M752.5 135v2M753.5 137v2M754.5 139v2M755.5 141v2M756.5 143v2M757.5 145v2M758.5 147v2M759.5 149v2M760.5 151v2M761.5 153v2M762.5 155v2M763.5 157v2M764.5 159v2M765.5 161v1M765.5 162v2M766.5 164v2M767.5 166v3M768.5 169v2M769.5 171v3M770.5 174v3M771.5 177v2M772.5 179v1M772.5 180v2M773.5 182v3M774.5 185v3M775.5 188v2M776.5 190v3M777.5 193v3M778.5 196v3M779.5 199v1M779.5 200v1M780.5 201v2M781.5 203v2M782.5 205v2M783.5 207v2M784.5 209v2M785.5 211v2M786.5 213v2M787.5 215v3M788.5 218v3M789.5 221v3M790.5 224v3M791.5 227v3M792.5 230v3M793.5 233v1M793.5 234v2M794.5 236v3M795.5 239v4M796.5 243v3M797.5 246v3M798.5 249v4M799.5 253v3M800.5 256v1M800.5 257v2M801.5 259v2M802.5 261v2M803.5 263v2M804.5 265v3M805.5 268v2M806.5 270v2M807.5 272v1M807 273.5h1M808 272.5h2M810 271.5h2M812 270.5h2M814 269.5h1M815 268.5h1M816 267.5h1M817 266.5h1M818 265.5h1M819 264.5h1M820 263.5h1M821 262.5h2M823 261.5h2M825 260.5h2M827 259.5h1M828 259.5h1M829 258.5h2M831 257.5h2M833 256.5h2M835 255.5h4M839 254.5h3M842 254.5h2M844 255.5h2M846 256.5h2M848 257.5h1M849 257.5h1M850 258.5h1M851 259.5h1M852 260.5h2M854 261.5h1M855 262.5h1M856 263.5h1M857 264.5h2M859 265.5h1M860 266.5h1M861 267.5h2M863 268.5h1M864 269.5h2M866 270.5h1M867 271.5h1M868 272.5h2M870 273.5h1M871 274.5h2M873 275.5h2M875 276.5h2M877 277.5h4M881 278.5h3M884 278.5h2M886 279.5h2M888 280.5h2M890 281.5h1M891 281.5h1M892 282.5h1M893 283.5h1M894 284.5h2M896 285.5h1M897 286.5h1M898 287.5h1M899 288.5h1M900 289.5h1M901 290.5h1M902 291.5h1M903 292.5h1M904 293.5h1M905.5 294v1M906.5 295v1M907.5 296v2M908.5 298v1M909.5 299v1M910.5 300v2M911.5 302v1M912 303.5h1M913 304.5h2M915 305.5h1M916 306.5h1M917 307.5h2M919 308.5h1M920 309.5h2M922 310.5h1M923 311.5h1M924 312.5h2M926 313.5h1M927 314.5h2M929 315.5h1M930 316.5h1M931 317.5h2M933.5 318v2M934.5 320v2M935.5 322v2M936.5 324v2M937.5 326v2M938.5 328v2M939.5 330v2M940.5 332v1M940.5 333v2M941.5 335v2M942.5 337v2M943.5 339v2M944.5 341v2M945.5 343v2M946.5 345v2M947.5 347v1M947.5 348v2M948.5 350v3M949.5 353v2M950.5 355v3M951.5 358v3M952.5 361v2M953.5 363v3M954.5 366v1M954.5 367v2M955.5 369v3M956.5 372v3M957.5 375v2M958.5 377v3M959.5 380v3M960.5 383v3M961.5 386v1M961.5 387v1M962.5 388v1M963.5 389v2M964.5 391v1M965.5 392v1M966.5 393v2M967.5 395v1M968 396.5h2M970 397.5h2M972 398.5h2M974 399.5h1M975 399.5h4M979 400.5h3M982 400.5h4M986 401.5h3M989 401.5h4M993 402.5h3M996 402.5h7M1003 402.5h7M1010 402.5h7M1017 402.5h2M1019 401.5h4M1023 400.5h1M1024 400.5h4M1028 399.5h3M1031 399.5h1M1032 398.5h2M1034 397.5h2M1036 396.5h2M1038 395.5h2M1040 394.5h2M1042 393.5h2M1044 392.5h1M1045 392.5h2M1047 391.5h2M1049 390.5h2M1051 389.5h1M1052 389.5h2M1054 388.5h2M1056 387.5h2M1058 386.5h1M1059 386.5h4M1063 385.5h3M1066 385.5h2M1068 384.5h2M1070 383.5h2M1072 382.5h1M1073 382.5h1M1074 381.5h1M1075 380.5h1M1076 379.5h1M1077 378.5h1M1078 377.5h1M1079 376.5h1M1080 375.5h1M1081 374.5h1M1082 373.5h1M1083 372.5h1M1084 371.5h1M1085 370.5h1M1086 369.5h1M1087 368.5h1M1088 367.5h2M1090 366.5h1M1091 365.5h1M1092 364.5h2M1094 363.5h1M1095 362.5h1M1096 361.5h1M1097 360.5h1M1098 359.5h1M1099 358.5h1M1100 357.5h1M1101 356.5h1M1102 355.5h2M1104 354.5h1M1105 353.5h1M1106 352.5h2M1108 351.5h1M1109 350.5h1M1110 349.5h1M1111 348.5h1M1112 347.5h1M1113 346.5h1M1114 345.5h1M1115 344.5h1M1116 343.5h2M1118 342.5h1M1119 341.5h1M1120 340.5h2M1122 339.5h2M1124 338.5h2M1126 337.5h2M1128 336.5h1M1129 336.5h1M1130 335.5h2M1132 334.5h2M1134 333.5h2M1136.5 332v1M1137.5 331v1M1138.5 330v1M1139.5 329v1M1140.5 327v2M1141.5 326v1M1142.5 325v1M1143 324.5h1M1144 323.5h2M1146 322.5h1M1147 321.5h1M1148 320.5h2M1150 319.5h4M1154 318.5h3" fill="none" stroke="#e1e11e" stroke-width="1" shape-rendering="crispEdges"/>
<path d="M72.5 255v1M73.5 256v2M74.5 258v2M75.5 260v1M76.5 261v2M77.5 263v2M78.5 265v2M79.5 267v1M80.5 268v2M81.5 270v1M82.5 271v2M83.5 273v2M84.5 275v1M85.5 276v2M86 278.5h2M88 279.5h2M90 280.5h2M92 281.5h1M93 281.5h1M94 282.5h1M95 283.5h1M96 284.5h2M98 285.5h1M99 286.5h1M100 287.5h4M104 288.5h3M107 288.5h2M109 289.5h4M113 290.5h1M114 290.5h4M118 291.5h3M121 291.5h7M128 291.5h4M132 292.5h3M135 292.5h7M142.5 292v1M143.5 293v1M144.5 294v2M145.5 296v1M146.5 297v1M147.5 298v2M148.5 300v1M149 301.5h1M150 302.5h1M151 303.5h1M152 304.5h2M154 305.5h1M155 306.5h1M156 307.5h1M157 308.5h1M158 309.5h1M159 310.5h1M160 311.5h1M161 312.5h1M162 313.5h1M163 314.5h1M164 315.5h2M166 316.5h2M168 317.5h2M170 318.5h2M172 319.5h4M176 320.5h1M177 320.5h2M179 321.5h4M183 322.5h1M184 322.5h2M186 323.5h4M190 324.5h1M191 324.5h4M195 325.5h3M198 325.5h1M199 326.5h1M200 327.5h1M201 328.5h2M203 329.5h1M204 330.5h1M205 331.5h1M206 332.5h2M208 333.5h1M209 334.5h1M210 335.5h2M212 336.5h2M214 335.5h2M216 334.5h2M218 333.5h1M219 333.5h2M221 332.5h2M223 331.5h2M225 330.5h1M226 330.5h1M227 329.5h1M228 328.5h1M229 327.5h2M231 326.5h1M232 325.5h1M233.5 324v1M234.5 322v2M235.5 321v1M236.5 319v2M237.5 317v2M238.5 316v1M239.5 314v2M240.5 313v1M241.5 312v1M242.5 311v1M243.5 310v1M244.5 308v2M245.5 307v1M246.5 306v1M247 305.5h4M251 306.5h3M254 306.5h2M256 305.5h2M258 304.5h2M260 303.5h1M261 303.5h7M268 303.5h2M270 304.5h4M274 305.5h1M275 305.5h2M277 306.5h4M281 307.5h1M282 307.5h2M284 308.5h4M288 309.5h1M289 309.5h2M291 310.5h4M295 311.5h1M296 311.5h4M300 312.5h3M303 312.5h2M305 313.5h4M309 314.5h1M310 314.5h1M311 315.5h2M313 316.5h2M315 317.5h2M317 318.5h2M319 319.5h4M323 320.5h1M324 320.5h2M326 319.5h4M330 318.5h1M331 318.5h4M335 317.5h3M338 317.5h1M339 316.5h1M340 315.5h1M341 314.5h2M343 313.5h1M344 312.5h1M345 311.5h2M347 310.5h4M351 309.5h1M352 309.5h4M356 308.5h3M359 308.5h7M366 308.5h2M368 307.5h4M372 306.5h1M373 306.5h2M375 305.5h2M377 304.5h2M379 303.5h1M380.5 303v1M381.5 302v1M382.5 301v1M383.5 300v1M384.5 298v2M385.5 297v1M386.5 296v1M387.5 295v1M388.5 293v2M389.5 291v2M390.5 289v2M391.5 287v2M392.5 285v2M393.5 283v2M394.5 282v1M394.5 281v1M395.5 279v2M396.5 278v1M397.5 276v2M398.5 274v2M399.5 273v1M400.5 271v2M401.5 270v1M402.5 268v2M403.5 266v2M404.5 264v2M405.5 262v2M406.5 260v2M407.5 258v2M408.5 257v1M409.5 255v2M410.5 254v1M411.5 252v2M412.5 250v2M413.5 249v1M414.5 247v2M415 246.5h1M416 245.5h2M418 244.5h2M420 243.5h2M422 242.5h2M424 241.5h2M426 240.5h2M428 239.5h1M429 239.5h2M431 240.5h2M433 241.5h2M435 242.5h1M436 242.5h1M437 243.5h2M439 244.5h2M441 245.5h2M443.5 246v1M444.5 247v1M445.5 248v1M446.5 249v1M447.5 250v2M448.5 252v1M449.5 253v1M450 254.5h1M451 255.5h2M453 256.5h1M454 257.5h1M455 258.5h2M457 259.5h1M458 260.5h1M459 261.5h1M460 262.5h2M462 263.5h1M463 264.5h1M464 265.5h7M471 265.5h4M475 264.5h3M478 264.5h2M480 263.5h2M482 262.5h2M484 261.5h1M485 261.5h7M492 261.5h4M496 262.5h3M499 262.5h7M506 262.5h7M513 262.5h4M517 263.5h3M520 263.5h7M527 263.5h7M534 263.5h7M541 263.5h2M543 262.5h4M547 261.5h1M548 261.5h2M550 260.5h2M552 259.5h2M554 258.5h1M555 258.5h4M559 257.5h3M562 257.5h2M564 256.5h4M568 255.5h1M569 255.5h2M571 254.5h2M573 253.5h2M575 252.5h1M576 252.5h4M580 251.5h3M583 251.5h7M590 251.5h7M597 251.5h4M601 250.5h3M604 250.5h4M608 249.5h3M611 249.5h1M612 248.5h1M613 247.5h1M614 246.5h2M616 245.5h1M617 244.5h1M618 243.5h1M619 242.5h2M621 241.5h1M622 240.5h1M623 239.5h2M625.5 238v1M626.5 239v2M627.5 241v2M628.5 243v2M629.5 245v2M630.5 247v2M631.5 249v2M632.5 251v1M632.5 252v2M633.5 254v3M634.5 257v3M635.5 260v3M636.5 263v4M637.5 267v3M638.5 270v3M639.5 273v1M639.5 274v2M640.5 276v2M641.5 278v3M642.5 281v2M643.5 283v3M644.5 286v3M645.5 289v2M646.5 291v1M646.5 292v3M647.5 295v4M648.5 299v5M649.5 304v4M650.5 308v4M651.5 312v5M652.5 317v4M653.5 321v2M653.5 323v2M654.5 325v2M655.5 327v2M656.5 329v2M657.5 331v3M658.5 334v2M659.5 336v2M660.5 338v1M660.5 339v1M661.5 340v2M662.5 342v1M663.5 343v2M664.5 345v2M665.5 347v1M666.5 348v2M667.5 350v1M668.5 351v1M669.5 352v2M670.5 354v1M671.5 355v1M672.5 356v2M673.5 358v1M674.5 359v1M675.5 360v1M676.5 361v2M677.5 363v1M678.5 364v1M679.5 365v2M680.5 367v1M681.5 368v1M682.5 369v1M683.5 370v2M684.5 372v1M685.5 373v1M686.5 374v2M687.5 376v1M688.5 377v1M689.5 378v1M690.5 379v2M691.5 381v1M692.5 382v1M693.5 383v2M694.5 385v1M695.5 386v1M696.5 387v2M697.5 389v2M698.5 391v2M699.5 393v2M700.5 395v2M701.5 397v2M702.5 399v1M703.5 400v1M704.5 401v2M705.5 403v1M706.5 404v1M707.5 405v2M708.5 407v1M709 408.5h1M710 409.5h2M712 410.5h1M713 411.5h1M714 412.5h2M716 413.5h2M718 414.5h2M720 415.5h2M722 416.5h1M723 416.5h4M727 417.5h3M730 417.5h1M731 418.5h2M733 419.5h1M734 420.5h1M735 421.5h2M737 422.5h1M738 423.5h1M739 424.5h1M740 425.5h2M742 426.5h1M743 427.5h1M744 428.5h1M745 429.5h2M747 430.5h1M748 431.5h1M749 432.5h2M751 433.5h2M753 432.5h4M757 431.5h1M758 431.5h1M759 430.5h2M761 429.5h2M763 428.5h2M765 427.5h1M766 426.5h1M767 425.5h1M768 424.5h2M770 423.5h1M771 422.5h1M772 421.5h1M773 420.5h1M774 419.5h1M775 418.5h1M776 417.5h1M777 416.5h1M778 415.5h1M779 414.5h4M783 413.5h3M786 413.5h1M787 412.5h2M789 411.5h2M791 410.5h2M793 409.5h1M794 408.5h2M796 407.5h2M798 406.5h2M800 405.5h2M802 404.5h4M806 403.5h1M807.5 403v1M808.5 404v2M809.5 406v2M810.5 408v2M811.5 410v2M812.5 412v2M813.5 414v2M814.5 416v2M815.5 418v2M816.5 420v3M817.5 423v2M818.5 425v3M819.5 428v3M820.5 431v2M821.5 433v1M821.5 434v1M822.5 435v2M823.5 437v2M824.5 439v1M825.5 440v2M826.5 442v2M827.5 444v2M828.5 446v1M829.5 447v1M830.5 448v2M831.5 450v1M832.5 451v1M833.5 452v2M834.5 454v1M835.5 455v1M836.5 456v2M837.5 458v1M838.5 459v1M839.5 460v2M840.5 462v1M841.5 463v2M842 465.5h1M843 466.5h1M844 467.5h1M845 468.5h2M847 469.5h1M848 470.5h1M849 471.5h1M850 472.5h1M851 473.5h1M852 474.5h2M854 475.5h1M855 476.5h1M856 477.5h1M857 478.5h2M859 479.5h2M861 480.5h2M863 481.5h1M864 482.5h1M865 483.5h1M866 484.5h2M868 485.5h1M869 486.5h1M870 487.5h1M871 488.5h1M872 489.5h1M873 490.5h2M875 491.5h1M876 492.5h1M877 493.5h1M878 494.5h1M879 495.5h1M880 496.5h1M881 497.5h1M882 498.5h1M883 499.5h1M884 500.5h1M885 501.5h1M886 502.5h1M887 503.5h1M888 504.5h1M889 505.5h1M890 506.5h1M891 507.5h4M895 508.5h3M898 508.5h4M902 509.5h3M905 509.5h4M909 508.5h3M912 508.5h4M916 509.5h3M919 509.5h4M923 510.5h3M926 510.5h7M933 510.5h1M934 509.5h2M936 508.5h1M937 507.5h1M938 506.5h2M940 505.5h7M947 505.5h1M948 504.5h1M949 503.5h1M950 502.5h1M951 501.5h1M952 500.5h1M953 499.5h1M954.5 498v1M955.5 496v2M956.5 494v2M957.5 492v2M958.5 490v2M959.5 488v2M960.5 486v2M961 485.5h1M962 484.5h1M963 483.5h1M964 482.5h2M966 481.5h1M967 480.5h1M968 479.5h4M972 478.5h3M975 478.5h4M979 477.5h3M982 477.5h7M989 477.5h4M993 478.5h3M996 478.5h4M1000 477.5h3M1003 477.5h7M1010 477.5h7M1017 477.5h4M1021 476.5h3M1024 476.5h7M1031 476.5h2M1033 477.5h4M1037 478.5h1M1038 478.5h4M1042 479.5h3M1045 479.5h4M1049 478.5h3M1052 478.5h4M1056 477.5h3M1059 477.5h2M1061 476.5h4M1065 475.5h1M1066 475.5h2M1068 474.5h2M1070 473.5h2M1072 472.5h1M1073 472.5h2M1075 473.5h4M1079 474.5h1M1080 474.5h2M1082 475.5h4M1086 476.5h1M1087 476.5h2M1089 477.5h4M1093 478.5h1M1094 478.5h2M1096 479.5h4M1100 480.5h1M1101 480.5h4M1105 481.5h3M1108 481.5h4M1112 482.5h3M1115 482.5h2M1117 481.5h4M1121 480.5h1M1122.5 480v1M1123.5 479v1M1124.5 477v2M1125.5 476v1M1126.5 475v1M1127.5 473v2M1128.5 472v1M1129 471.5h1M1130 470.5h2M1132 469.5h1M1133 468.5h1M1134 467.5h2M1136 466.5h7M1143 466.5h7M1150 466.5h2M1152 465.5h4M1156 464.5h1" fill="none" stroke="#f020f0" stroke-width="1" shape-rendering="crispEdges"/>
<path d="M72 173.5h1M73 174.5h2M75 175.5h2M77 176.5h2M79 177.5h1M80 178.5h1M81 179.5h1M82 180.5h2M84 181.5h1M85 182.5h1M86 183.5h1M87 184.5h1M88 185.5h1M89 186.5h1M90 187.5h1M91 188.5h1M92 189.5h1M93 190.5h1M94 191.5h2M96 192.5h1M97 193.5h1M98 194.5h2M100 195.5h1M101 196.5h2M103 197.5h1M104 198.5h1M105 199.5h2M107 200.5h2M109 201.5h2M111 202.5h2M113 203.5h1M114 203.5h2M116 204.5h2M118 205.5h2M120 206.5h1M121 206.5h4M125 207.5h3M128 207.5h4M132 208.5h3M135 208.5h4M139 209.5h3M142 209.5h1M143 210.5h2M145 211.5h2M147 212.5h2M149 213.5h2M151 214.5h2M153 215.5h2M155 216.5h1M156 216.5h2M158 217.5h2M160 218.5h2M162 219.5h1M163 219.5h4M167 220.5h3M170 220.5h2M172 221.5h4M176 222.5h1M177 222.5h4M181 223.5h3M184 223.5h4M188 224.5h3M191 224.5h2M193 225.5h4M197 226.5h1M198 226.5h2M200 227.5h2M202 228.5h2M204 229.5h1M205 229.5h1M206 230.5h2M208 231.5h1M209 232.5h1M210 233.5h2M212 234.5h1M213 235.5h2M215 236.5h1M216 237.5h1M217 238.5h2M219 239.5h1M220 240.5h2M222 241.5h2M224 242.5h2M226 243.5h1M227 244.5h2M229 245.5h1M230 246.5h1M231 247.5h2M233 248.5h1M234 249.5h2M236 250.5h2M238 251.5h2M240 252.5h4M244 253.5h3M247 253.5h4M251 252.5h3M254 252.5h2M256 251.5h4M260 250.5h1M261 250.5h2M263 249.5h4M267 248.5h1M268 248.5h2M270 247.5h4M274 246.5h1M275 246.5h2M277 245.5h2M279 244.5h2M281 243.5h1M282 243.5h2M284 242.5h2M286 241.5h2M288 240.5h1M289 240.5h2M291 239.5h4M295 238.5h1M296 238.5h4M300 237.5h3M303 237.5h2M305 236.5h4M309 235.5h1M310 235.5h2M312 234.5h4M316 233.5h1M317 233.5h2M319 232.5h4M323 231.5h1M324 231.5h1M325 230.5h1M326 229.5h1M327 228.5h2M329 227.5h1M330 226.5h1M331 225.5h1M332 224.5h2M334 223.5h1M335 222.5h1M336 221.5h2M338 220.5h1M339 219.5h2M341 218.5h1M342 217.5h1M343 216.5h2M345 215.5h1M346 214.5h2M348 213.5h1M349 212.5h1M350 211.5h2M352 210.5h1M353 209.5h2M355 208.5h1M356 207.5h1M357 206.5h2M359 205.5h1M360 204.5h1M361 203.5h1M362 202.5h1M363 201.5h1M364 200.5h1M365 199.5h1M366 198.5h1M367 197.5h1M368 196.5h1M369 195.5h2M371 194.5h1M372 193.5h1M373 192.5h1M374 191.5h1M375 190.5h1M376 189.5h2M378 188.5h1M379 187.5h1M380 186.5h1M381 185.5h1M382 184.5h1M383 183.5h1M384 182.5h1M385 181.5h1M386 180.5h1M387 179.5h1M388 178.5h1M389 177.5h1M390 176.5h1M391 175.5h1M392 174.5h1M393 173.5h1M394 172.5h1M395 171.5h2M397 170.5h1M398 169.5h1M399 168.5h2M401 167.5h1M402 166.5h2M404 165.5h2M406 164.5h2M408 163.5h2M410 162.5h2M412 161.5h2M414 160.5h1M415 160.5h4M419 159.5h3M422 159.5h4M426 158.5h3M429 158.5h7M436 158.5h4M440 159.5h3M443 159.5h2M445 160.5h4M449 161.5h1M450 161.5h2M452 162.5h4M456 163.5h1M457 163.5h2M459 164.5h4M463 165.5h1M464 165.5h4M468 164.5h3M471 164.5h4M475 163.5h3M478 163.5h2M480 162.5h4M484 161.5h1M485 161.5h7M492 161.5h4M496 162.5h3M499 162.5h7M506 162.5h4M510 163.5h3M513 163.5h4M517 164.5h3M520 164.5h7M527 164.5h7M534 164.5h4M538 165.5h3M541 165.5h4M545 166.5h3M548 166.5h2M550 167.5h2M552 168.5h2M554 169.5h1M555 169.5h2M557 170.5h2M559 171.5h2M561 172.5h1M562 172.5h2M564 173.5h2M566 174.5h2M568 175.5h1M569 175.5h2M571 176.5h2M573 177.5h2M575 178.5h1M576 178.5h4M580 179.5h3M583 179.5h7M590 179.5h4M594 178.5h3M597 178.5h4M601 177.5h3M604 177.5h7M611 177.5h2M613 176.5h4M617 175.5h1M618 175.5h4M622 174.5h3M625 174.5h4M629 175.5h3M632 175.5h1M633 176.5h2M635 177.5h2M637 178.5h2M639 179.5h1M640 180.5h2M642 181.5h2M644 182.5h2M646.5 183v1M647.5 184v1M648.5 185v1M649.5 186v1M650.5 187v2M651.5 189v1M652.5 190v1M653 191.5h1M654 192.5h1M655 193.5h1M656 194.5h1M657 195.5h1M658 196.5h1M659 197.5h1M660 198.5h1M661 199.5h1M662 200.5h1M663 201.5h2M665 202.5h1M666 203.5h1M667 204.5h1M668 205.5h2M670 206.5h1M671 207.5h1M672 208.5h2M674 209.5h1M675 210.5h2M677 211.5h1M678 212.5h1M679 213.5h2M681 214.5h1M682 215.5h1M683 216.5h1M684 217.5h2M686 218.5h1M687 219.5h1M688 220.5h1M689 221.5h1M690 222.5h1M691 223.5h2M693 224.5h1M694 225.5h1M695 226.5h1M696 227.5h1M697 228.5h1M698 229.5h1M699 230.5h1M700 231.5h1M701 232.5h1M702 233.5h1M703 234.5h1M704 235.5h1M705 236.5h1M706 237.5h1M707 238.5h1M708 239.5h1M709.5 240v1M710.5 241v1M711.5 242v1M712.5 243v1M713.5 244v2M714.5 246v1M715.5 247v1M716 248.5h1M717 249.5h1M718 250.5h1M719 251.5h1M720 252.5h1M721 253.5h1M722 254.5h1M723 255.5h1M724 256.5h1M725 257.5h1M726 258.5h1M727 259.5h1M728 260.5h1M729 261.5h1M730.5 262v1M731.5 263v1M732.5 264v1M733.5 265v1M734.5 266v2M735.5 268v1M736.5 269v1M737 270.5h1M738 271.5h1M739 272.5h1M740 273.5h1M741 274.5h1M742 275.5h1M743 276.5h1M744 277.5h1M745 278.5h1M746 279.5h1M747 280.5h2M749 281.5h1M750 282.5h1M751 283.5h1M752 284.5h1M753 285.5h1M754 286.5h2M756 287.5h1M757 288.5h1M758 289.5h1M759 290.5h2M761 291.5h1M762 292.5h1M763 293.5h2M765 294.5h1M766 295.5h1M767 296.5h1M768 297.5h2M770 298.5h1M771 299.5h1M772 300.5h1M773 301.5h1M774 302.5h1M775 303.5h1M776 304.5h1M777 305.5h1M778 306.5h1M779 307.5h1M780 308.5h1M781 309.5h1M782 310.5h2M784 311.5h1M785 312.5h1M786.5 313v1M787.5 314v1M788.5 315v2M789.5 317v1M790.5 318v1M791.5 319v2M792.5 321v1M793.5 322v1M794.5 323v1M795.5 324v1M796.5 325v1M797.5 326v2M798.5 328v1M799.5 329v1M800.5 330v1M801.5 331v1M802.5 332v1M803.5 333v1M804.5 334v2M805.5 336v1M806.5 337v1M807 338.5h1M808 339.5h2M810 340.5h1M811 341.5h1M812 342.5h2M814 343.5h1M815 344.5h2M817 345.5h1M818 346.5h1M819 347.5h2M821 348.5h1M822 349.5h2M824 350.5h2M826 351.5h2M828 352.5h2M830 353.5h2M832 354.5h2M834 355.5h1M835 355.5h1M836 356.5h2M838 357.5h2M840 358.5h2M842 359.5h1M843 360.5h2M845 361.5h1M846 362.5h1M847 363.5h2M849 364.5h1M850 365.5h1M851 366.5h1M852 367.5h2M854 368.5h1M855 369.5h1M856 370.5h1M857 371.5h2M859 372.5h2M861 373.5h2M863 374.5h1M864 375.5h1M865 376.5h1M866 377.5h2M868 378.5h1M869 379.5h1M870 380.5h1M871 381.5h2M873 382.5h1M874 383.5h1M875 384.5h2M877 385.5h1M878 386.5h2M880 387.5h2M882 388.5h2M884 389.5h1M885 390.5h2M887 391.5h2M889 392.5h2M891 393.5h1M892 394.5h2M894 395.5h1M895 396.5h1M896 397.5h2M898 398.5h1M899 399.5h2M901 400.5h2M903 401.5h2M905 402.5h1M906 403.5h2M908 404.5h2M910 405.5h2M912 406.5h2M914 407.5h4M918 408.5h1M919 408.5h2M921 409.5h2M923 410.5h2M925 411.5h1M926 411.5h2M928 412.5h2M930 413.5h2M932 414.5h1M933 414.5h1M934 415.5h2M936 416.5h1M937 417.5h1M938 418.5h2M940 419.5h1M941 420.5h1M942 421.5h1M943 422.5h1M944 423.5h1M945 424.5h1M946 425.5h1M947 426.5h1M948 427.5h1M949 428.5h1M950 429.5h2M952 430.5h1M953 431.5h1M954 432.5h1M955 433.5h2M957 434.5h2M959 435.5h2M961 436.5h2M963 437.5h4M967 438.5h1M968 438.5h7M975 438.5h7M982 438.5h4M986 439.5h3M989 439.5h4M993 440.5h3M996 440.5h4M1000 439.5h3M1003 439.5h7M1010 439.5h7M1017 439.5h4M1021 438.5h3M1024 438.5h7M1031 438.5h2M1033 437.5h4M1037 436.5h1M1038 436.5h4M1042 435.5h3M1045 435.5h2M1047 434.5h4M1051 433.5h1M1052 433.5h4M1056 432.5h3M1059 432.5h2M1061 431.5h4M1065 430.5h1M1066 430.5h2M1068 429.5h2M1070 428.5h2M1072 427.5h1M1073 427.5h2M1075 426.5h4M1079 425.5h1M1080 425.5h2M1082 424.5h2M1084 423.5h2M1086 422.5h1M1087 422.5h2M1089 421.5h4M1093 420.5h1M1094 420.5h2M1096 419.5h4M1100 418.5h1M1101 418.5h2M1103 417.5h2M1105 416.5h2M1107 415.5h1M1108 415.5h2M1110 414.5h4M1114 413.5h1M1115 413.5h2M1117 412.5h2M1119 411.5h2M1121 410.5h1M1122 410.5h1M1123 409.5h1M1124 408.5h1M1125 407.5h2M1127 406.5h1M1128 405.5h1M1129 404.5h1M1130 403.5h2M1132 402.5h1M1133 401.5h1M1134 400.5h2M1136 399.5h1M1137 398.5h2M1139 397.5h2M1141 396.5h2M1143 395.5h2M1145 394.5h4M1149 393.5h1M1150 393.5h2M1152 392.5h4M1156 391.5h1" fill="none" stroke="#ffffff" stroke-width="1" shape-rendering="crispEdges"/>
<g shape-rendering="crispEdges">
<rect x="72.0" y="653.0" width="1" height="13.5" fill="#54b888"/>
<rect x="79.0" y="653.0" width="1" height="47.4" fill="#54b888"/>
<rect x="86.0" y="653.0" width="1" height="61.9" fill="#54b888"/>
<rect x="93.0" y="653.0" width="1" height="61.2" fill="#54b888"/>
<rect x="100.0" y="653.0" width="1" height="61.6" fill="#54b888"/>
<rect x="107.0" y="653.0" width="1" height="55.3" fill="#54b888"/>
<rect x="114.0" y="653.0" width="1" height="41.4" fill="#54b888"/>
<rect x="121.0" y="653.0" width="1" height="34.2" fill="#54b888"/>
<rect x="128.0" y="653.0" width="1" height="19.3" fill="#54b888"/>
<rect x="135.0" y="653.0" width="1" height="10.5" fill="#54b888"/>
<rect x="142.0" y="649.6" width="1" height="4.4" fill="#ec4f5d"/>
<rect x="149.0" y="653.0" width="1" height="19.2" fill="#54b888"/>
<rect x="156.0" y="653.0" width="1" height="24.0" fill="#54b888"/>
<rect x="163.0" y="653.0" width="1" height="32.7" fill="#54b888"/>
<rect x="170.0" y="653.0" width="1" height="28.2" fill="#54b888"/>
<rect x="177.0" y="653.0" width="1" height="19.2" fill="#54b888"/>
<rect x="184.0" y="653.0" width="1" height="15.4" fill="#54b888"/>
<rect x="191.0" y="653.0" width="1" height="9.6" fill="#54b888"/>
<rect x="198.0" y="653.0" width="1" height="2.9" fill="#54b888"/>
<rect x="205.0" y="653.0" width="1" height="7.1" fill="#54b888"/>
<rect x="212.0" y="653.0" width="1" height="13.8" fill="#54b888"/>
<rect x="219.0" y="653.0" width="1" height="6.9" fill="#54b888"/>
<rect x="226.0" y="653.0" width="1" height="3.8" fill="#54b888"/>
<rect x="233.0" y="649.8" width="1" height="4.2" fill="#ec4f5d"/>
<rect x="240.0" y="636.2" width="1" height="17.8" fill="#ec4f5d"/>
<rect x="247.0" y="624.0" width="1" height="30.0" fill="#ec4f5d"/>
<rect x="254.0" y="616.7" width="1" height="37.3" fill="#ec4f5d"/>
<rect x="261.0" y="616.8" width="1" height="37.2" fill="#ec4f5d"/>
<rect x="268.0" y="614.5" width="1" height="39.5" fill="#ec4f5d"/>
<rect x="275.0" y="607.0" width="1" height="47.0" fill="#ec4f5d"/>
<rect x="282.0" y="603.1" width="1" height="50.9" fill="#ec4f5d"/>
<rect x="289.0" y="600.4" width="1" height="53.6" fill="#ec4f5d"/>
<rect x="296.0" y="602.4" width="1" height="51.6" fill="#ec4f5d"/>
<rect x="303.0" y="610.3" width="1" height="43.7" fill="#ec4f5d"/>
<rect x="310.0" y="610.5" width="1" height="43.5" fill="#ec4f5d"/>
<rect x="317.0" y="609.8" width="1" height="44.2" fill="#ec4f5d"/>
<rect x="324.0" y="610.7" width="1" height="43.3" fill="#ec4f5d"/>
<rect x="331.0" y="610.0" width="1" height="44.0" fill="#ec4f5d"/>
<rect x="338.0" y="612.8" width="1" height="41.2" fill="#ec4f5d"/>
<rect x="345.0" y="619.9" width="1" height="34.1" fill="#ec4f5d"/>
<rect x="352.0" y="620.2" width="1" height="33.8" fill="#ec4f5d"/>
<rect x="359.0" y="620.8" width="1" height="33.2" fill="#ec4f5d"/>
<rect x="366.0" y="615.3" width="1" height="38.7" fill="#ec4f5d"/>
<rect x="373.0" y="614.3" width="1" height="39.7" fill="#ec4f5d"/>
<rect x="380.0" y="619.7" width="1" height="34.3" fill="#ec4f5d"/>
<rect x="387.0" y="625.7" width="1" height="28.3" fill="#ec4f5d"/>
<rect x="394.0" y="631.7" width="1" height="22.3" fill="#ec4f5d"/>
<rect x="401.0" y="649.5" width="1" height="4.5" fill="#ec4f5d"/>
<rect x="408.0" y="653.0" width="1" height="18.5" fill="#54b888"/>
<rect x="415.0" y="653.0" width="1" height="38.1" fill="#54b888"/>
<rect x="422.0" y="653.0" width="1" height="56.7" fill="#54b888"/>
<rect x="429.0" y="653.0" width="1" height="63.1" fill="#54b888"/>
<rect x="436.0" y="653.0" width="1" height="78.0" fill="#54b888"/>
<rect x="443.0" y="653.0" width="1" height="86.6" fill="#54b888"/>
<rect x="450.0" y="653.0" width="1" height="93.7" fill="#54b888"/>
<rect x="457.0" y="653.0" width="1" height="83.5" fill="#54b888"/>
<rect x="464.0" y="653.0" width="1" height="75.4" fill="#54b888"/>
<rect x="471.0" y="653.0" width="1" height="42.9" fill="#54b888"/>
<rect x="478.0" y="653.0" width="1" height="14.3" fill="#54b888"/>
<rect x="485.0" y="649.4" width="1" height="4.6" fill="#ec4f5d"/>
<rect x="492.0" y="644.8" width="1" height="9.2" fill="#ec4f5d"/>
<rect x="499.0" y="640.7" width="1" height="13.3" fill="#ec4f5d"/>
<rect x="506.0" y="638.9" width="1" height="15.1" fill="#ec4f5d"/>
<rect x="513.0" y="637.0" width="1" height="17.0" fill="#ec4f5d"/>
<rect x="520.0" y="639.5" width="1" height="14.5" fill="#ec4f5d"/>
<rect x="527.0" y="636.3" width="1" height="17.7" fill="#ec4f5d"/>
<rect x="534.0" y="631.2" width="1" height="22.8" fill="#ec4f5d"/>
<rect x="541.0" y="628.3" width="1" height="25.7" fill="#ec4f5d"/>
<rect x="548.0" y="626.6" width="1" height="27.4" fill="#ec4f5d"/>
<rect x="555.0" y="632.0" width="1" height="22.0" fill="#ec4f5d"/>
<rect x="562.0" y="648.1" width="1" height="5.9" fill="#ec4f5d"/>
<rect x="569.0" y="653.0" width="1" height="5.3" fill="#54b888"/>
<rect x="576.0" y="653.0" width="1" height="7.4" fill="#54b888"/>
<rect x="583.0" y="653.0" width="1" height="8.1" fill="#54b888"/>
<rect x="590.0" y="653.0" width="1" height="5.9" fill="#54b888"/>
<rect x="597.0" y="653.0" width="1" height="5.1" fill="#54b888"/>
<rect x="604.0" y="653.0" width="1" height="16.2" fill="#54b888"/>
<rect x="611.0" y="653.0" width="1" height="14.9" fill="#54b888"/>
<rect x="618.0" y="653.0" width="1" height="15.9" fill="#54b888"/>
<rect x="625.0" y="653.0" width="1" height="26.6" fill="#54b888"/>
<rect x="632.0" y="653.0" width="1" height="62.1" fill="#54b888"/>
<rect x="639.0" y="653.0" width="1" height="85.3" fill="#54b888"/>
<rect x="646.0" y="653.0" width="1" height="96.4" fill="#54b888"/>
<rect x="653.0" y="653.0" width="1" height="111.0" fill="#54b888"/>
<rect x="660.0" y="653.0" width="1" height="100.8" fill="#54b888"/>
<rect x="667.0" y="653.0" width="1" height="80.7" fill="#54b888"/>
<rect x="674.0" y="653.0" width="1" height="59.6" fill="#54b888"/>
<rect x="681.0" y="653.0" width="1" height="45.1" fill="#54b888"/>
<rect x="688.0" y="653.0" width="1" height="33.1" fill="#54b888"/>
<rect x="695.0" y="653.0" width="1" height="26.8" fill="#54b888"/>
<rect x="702.0" y="653.0" width="1" height="29.1" fill="#54b888"/>
<rect x="709.0" y="653.0" width="1" height="23.0" fill="#54b888"/>
<rect x="716.0" y="653.0" width="1" height="11.5" fill="#54b888"/>
<rect x="723.0" y="653.0" width="1" height="3.3" fill="#54b888"/>
<rect x="730.0" y="646.7" width="1" height="7.3" fill="#ec4f5d"/>
<rect x="737.0" y="651.4" width="1" height="2.6" fill="#ec4f5d"/>
<rect x="744.0" y="651.1" width="1" height="2.9" fill="#ec4f5d"/>
<rect x="751.0" y="650.0" width="1" height="4.0" fill="#ec4f5d"/>
<rect x="758.0" y="633.0" width="1" height="21.0" fill="#ec4f5d"/>
<rect x="765.0" y="621.8" width="1" height="32.2" fill="#ec4f5d"/>
<rect x="772.0" y="617.0" width="1" height="37.0" fill="#ec4f5d"/>
<rect x="779.0" y="617.9" width="1" height="36.1" fill="#ec4f5d"/>
<rect x="786.0" y="631.5" width="1" height="22.5" fill="#ec4f5d"/>
<rect x="793.0" y="650.0" width="1" height="4.0" fill="#ec4f5d"/>
<rect x="800.0" y="653.0" width="1" height="11.2" fill="#54b888"/>
<rect x="807.0" y="653.0" width="1" height="18.8" fill="#54b888"/>
<rect x="814.0" y="653.0" width="1" height="26.9" fill="#54b888"/>
<rect x="821.0" y="653.0" width="1" height="38.5" fill="#54b888"/>
<rect x="828.0" y="653.0" width="1" height="36.9" fill="#54b888"/>
<rect x="835.0" y="653.0" width="1" height="32.1" fill="#54b888"/>
<rect x="842.0" y="653.0" width="1" height="26.2" fill="#54b888"/>
<rect x="849.0" y="653.0" width="1" height="16.6" fill="#54b888"/>
<rect x="856.0" y="653.0" width="1" height="9.1" fill="#54b888"/>
<rect x="863.0" y="652.3" width="1" height="1.7" fill="#ec4f5d"/>
<rect x="870.0" y="651.1" width="1" height="2.9" fill="#ec4f5d"/>
<rect x="877.0" y="646.9" width="1" height="7.1" fill="#ec4f5d"/>
<rect x="884.0" y="647.3" width="1" height="6.7" fill="#ec4f5d"/>
<rect x="891.0" y="647.3" width="1" height="6.7" fill="#ec4f5d"/>
<rect x="898.0" y="637.0" width="1" height="17.0" fill="#ec4f5d"/>
<rect x="905.0" y="627.7" width="1" height="26.3" fill="#ec4f5d"/>
<rect x="912.0" y="619.3" width="1" height="34.7" fill="#ec4f5d"/>
<rect x="919.0" y="616.2" width="1" height="37.8" fill="#ec4f5d"/>
<rect x="926.0" y="613.3" width="1" height="40.7" fill="#ec4f5d"/>
<rect x="933.0" y="612.7" width="1" height="41.3" fill="#ec4f5d"/>
<rect x="940.0" y="618.0" width="1" height="36.0" fill="#ec4f5d"/>
<rect x="947.0" y="638.1" width="1" height="15.9" fill="#ec4f5d"/>
<rect x="954.0" y="641.9" width="1" height="12.1" fill="#ec4f5d"/>
<rect x="961.0" y="630.7" width="1" height="23.3" fill="#ec4f5d"/>
<rect x="968.0" y="618.7" width="1" height="35.3" fill="#ec4f5d"/>
<rect x="975.0" y="613.7" width="1" height="40.3" fill="#ec4f5d"/>
<rect x="982.0" y="611.4" width="1" height="42.6" fill="#ec4f5d"/>
<rect x="989.0" y="614.1" width="1" height="39.9" fill="#ec4f5d"/>
<rect x="996.0" y="625.7" width="1" height="28.3" fill="#ec4f5d"/>
<rect x="1003.0" y="633.2" width="1" height="20.8" fill="#ec4f5d"/>
<rect x="1010.0" y="636.5" width="1" height="17.5" fill="#ec4f5d"/>
<rect x="1017.0" y="636.2" width="1" height="17.8" fill="#ec4f5d"/>
<rect x="1024.0" y="631.9" width="1" height="22.1" fill="#ec4f5d"/>
<rect x="1031.0" y="629.4" width="1" height="24.6" fill="#ec4f5d"/>
<rect x="1038.0" y="621.6" width="1" height="32.4" fill="#ec4f5d"/>
<rect x="1045.0" y="619.2" width="1" height="34.8" fill="#ec4f5d"/>
<rect x="1052.0" y="619.8" width="1" height="34.2" fill="#ec4f5d"/>
<rect x="1059.0" y="620.4" width="1" height="33.6" fill="#ec4f5d"/>
<rect x="1066.0" y="627.0" width="1" height="27.0" fill="#ec4f5d"/>
<rect x="1073.0" y="623.2" width="1" height="30.8" fill="#ec4f5d"/>
<rect x="1080.0" y="618.8" width="1" height="35.2" fill="#ec4f5d"/>
<rect x="1087.0" y="615.6" width="1" height="38.4" fill="#ec4f5d"/>
<rect x="1094.0" y="617.6" width="1" height="36.4" fill="#ec4f5d"/>
<rect x="1101.0" y="616.1" width="1" height="37.9" fill="#ec4f5d"/>
<rect x="1108.0" y="618.7" width="1" height="35.3" fill="#ec4f5d"/>
<rect x="1115.0" y="619.3" width="1" height="34.7" fill="#ec4f5d"/>
<rect x="1122.0" y="624.3" width="1" height="29.7" fill="#ec4f5d"/>
<rect x="1129.0" y="621.5" width="1" height="32.5" fill="#ec4f5d"/>
<rect x="1136.0" y="622.7" width="1" height="31.3" fill="#ec4f5d"/>
<rect x="1143.0" y="623.4" width="1" height="30.6" fill="#ec4f5d"/>
<rect x="1150.0" y="630.1" width="1" height="23.9" fill="#ec4f5d"/>
<rect x="1157.0" y="643.9" width="1" height="10.1" fill="#ec4f5d"/>
</g>
<path d="M72 619.5h1M73 620.5h1M74 621.5h1M75 622.5h2M77 623.5h1M78 624.5h1M79 625.5h1M80 626.5h1M81 627.5h1M82 628.5h1M83 629.5h1M84 630.5h1M85 631.5h1M86.5 632v1M87.5 633v1M88.5 634v1M89.5 635v1M90.5 636v2M91.5 638v1M92.5 639v1M93.5 640v1M94.5 641v1M95.5 642v1M96.5 643v1M97.5 644v2M98.5 646v1M99.5 647v1M100 648.5h1M101 649.5h1M102 650.5h1M103 651.5h2M105 652.5h1M106 653.5h1M107 654.5h1M108 655.5h1M109 656.5h1M110 657.5h2M112 658.5h1M113 659.5h1M114 660.5h1M115 661.5h2M117 662.5h2M119 663.5h2M121 664.5h2M123 665.5h4M127 666.5h1M128 666.5h2M130 667.5h4M134 668.5h1M135 668.5h4M139 667.5h3M142 667.5h2M144 668.5h4M148 669.5h1M149 669.5h2M151 670.5h2M153 671.5h2M155 672.5h1M156 672.5h1M157 673.5h2M159 674.5h1M160 675.5h1M161 676.5h2M163 677.5h2M165 678.5h2M167 679.5h2M169 680.5h1M170 680.5h2M172 681.5h4M176 682.5h1M177 682.5h2M179 683.5h4M183 684.5h1M184 684.5h4M188 685.5h3M191 685.5h4M195 686.5h3M198 686.5h4M202 687.5h3M205 687.5h4M209 688.5h3M212 688.5h4M216 689.5h3M219 689.5h4M223 690.5h3M226 690.5h4M230 689.5h3M233 689.5h2M235 688.5h4M239 687.5h1M240 687.5h2M242 686.5h2M244 685.5h2M246 684.5h1M247 684.5h1M248 683.5h2M250 682.5h1M251 681.5h1M252 680.5h2M254 679.5h1M255 678.5h2M257 677.5h1M258 676.5h1M259 675.5h2M261 674.5h1M262 673.5h2M264 672.5h2M266 671.5h2M268 670.5h1M269 669.5h1M270 668.5h1M271 667.5h2M273 666.5h1M274 665.5h1M275 664.5h1M276 663.5h1M277 662.5h1M278 661.5h2M280 660.5h1M281 659.5h1M282 658.5h1M283 657.5h1M284 656.5h1M285 655.5h1M286 654.5h1M287 653.5h1M288 652.5h1M289 651.5h1M290 650.5h1M291 649.5h1M292 648.5h2M294 647.5h1M295 646.5h1M296 645.5h1M297 644.5h1M298 643.5h1M299 642.5h2M301 641.5h1M302 640.5h1M303 639.5h1M304 638.5h2M306 637.5h1M307 636.5h1M308 635.5h2M310 634.5h1M311 633.5h1M312 632.5h1M313 631.5h2M315 630.5h1M316 629.5h1M317 628.5h1M318 627.5h2M320 626.5h1M321 625.5h1M322 624.5h2M324 623.5h1M325 622.5h2M327 621.5h1M328 620.5h1M329 619.5h2M331 618.5h1M332 617.5h2M334 616.5h1M335 615.5h1M336 614.5h2M338 613.5h1M339 612.5h2M341 611.5h2M343 610.5h2M345 609.5h1M346 608.5h2M348 607.5h1M349 606.5h1M350 605.5h2M352 604.5h1M353 603.5h2M355 602.5h2M357 601.5h2M359 600.5h1M360 599.5h2M362 598.5h2M364 597.5h2M366 596.5h1M367 595.5h2M369 594.5h1M370 593.5h1M371 592.5h2M373 591.5h1M374 590.5h2M376 589.5h2M378 588.5h2M380 587.5h1M381 586.5h2M383 585.5h2M385 584.5h2M387 583.5h2M389 582.5h2M391 581.5h2M393 580.5h1M394 580.5h7M401 580.5h2M403 581.5h4M407 582.5h1M408 582.5h1M409 583.5h2M411 584.5h1M412 585.5h1M413 586.5h2M415 587.5h1M416 588.5h1M417 589.5h1M418 590.5h1M419 591.5h1M420 592.5h1M421 593.5h1M422.5 594v1M423.5 595v1M424.5 596v1M425.5 597v1M426.5 598v2M427.5 600v1M428.5 601v1M429.5 602v1M430.5 603v2M431.5 605v1M432.5 606v1M433.5 607v2M434.5 609v1M435.5 610v2M436.5 612v1M437.5 613v2M438.5 615v1M439.5 616v1M440.5 617v2M441.5 619v1M442.5 620v2M443.5 622v1M444.5 623v2M445.5 625v2M446.5 627v1M447.5 628v2M448.5 630v2M449.5 632v2M450.5 634v1M451.5 635v2M452.5 637v1M453.5 638v2M454.5 640v2M455.5 642v1M456.5 643v2M457.5 645v1M458.5 646v1M459.5 647v2M460.5 649v1M461.5 650v1M462.5 651v2M463.5 653v1M464 654.5h1M465 655.5h2M467 656.5h1M468 657.5h1M469 658.5h2M471 659.5h2M473 660.5h4M477 661.5h1M478 661.5h7M485 661.5h4M489 660.5h3M492 660.5h2M494 659.5h4M498 658.5h1M499 658.5h2M501 657.5h4M505 656.5h1M506 656.5h2M508 655.5h4M512 654.5h1M513 654.5h2M515 653.5h4M519 652.5h1M520 652.5h2M522 651.5h4M526 650.5h1M527 650.5h2M529 649.5h4M533 648.5h1M534 648.5h1M535 647.5h2M537 646.5h2M539 645.5h2M541 644.5h2M543 643.5h2M545 642.5h2M547 641.5h1M548 641.5h2M550 640.5h4M554 639.5h1M555 639.5h4M559 638.5h3M562 638.5h7M569 638.5h4M573 639.5h3M576 639.5h4M580 640.5h3M583 640.5h4M587 641.5h3M590 641.5h4M594 642.5h3M597 642.5h2M599 643.5h4M603 644.5h1M604 644.5h2M606 645.5h4M610 646.5h1M611 646.5h4M615 647.5h3M618 647.5h1M619 648.5h2M621 649.5h2M623 650.5h2M625.5 651v1M626.5 652v1M627.5 653v1M628.5 654v1M629.5 655v2M630.5 657v1M631.5 658v1M632.5 659v1M633.5 660v2M634.5 662v1M635.5 663v1M636.5 664v2M637.5 666v1M638.5 667v2M639.5 669v1M640.5 670v2M641.5 672v2M642.5 674v1M643.5 675v2M644.5 677v2M645.5 679v2M646.5 681v1M647.5 682v2M648.5 684v2M649.5 686v2M650.5 688v2M651.5 690v2M652.5 692v2M653.5 694v1M653.5 695v1M654.5 696v2M655.5 698v2M656.5 700v2M657.5 702v2M658.5 704v2M659.5 706v2M660.5 708v1M661.5 709v2M662.5 711v1M663.5 712v1M664.5 713v2M665.5 715v1M666.5 716v2M667 718.5h1M668 719.5h1M669 720.5h1M670 721.5h1M671 722.5h1M672 723.5h1M673 724.5h1M674 725.5h1M675 726.5h1M676 727.5h1M677 728.5h2M679 729.5h1M680 730.5h1M681 731.5h1M682 732.5h2M684 733.5h2M686 734.5h2M688 735.5h2M690 736.5h2M692 737.5h2M694 738.5h1M695 738.5h1M696 739.5h2M698 740.5h2M700 741.5h2M702 742.5h2M704 743.5h2M706 744.5h2M708 745.5h1M709 745.5h4M713 746.5h3M716 746.5h7M723 746.5h7M730 746.5h4M734 745.5h3M737 745.5h7M744 745.5h7M751 745.5h2M753 744.5h2M755 743.5h2M757 742.5h1M758 742.5h1M759 741.5h2M761 740.5h2M763 739.5h2M765 738.5h1M766 737.5h2M768 736.5h2M770 735.5h2M772 734.5h1M773 733.5h2M775 732.5h1M776 731.5h1M777 730.5h2M779 729.5h2M781 728.5h4M785 727.5h1M786 727.5h4M790 726.5h3M793 726.5h2M795 727.5h4M799 728.5h1M800 728.5h2M802 729.5h4M806 730.5h1M807 730.5h2M809 731.5h2M811 732.5h2M813 733.5h1M814 733.5h1M815 734.5h2M817 735.5h1M818 736.5h1M819 737.5h2M821 738.5h1M822 739.5h2M824 740.5h1M825 741.5h1M826 742.5h2M828 743.5h1M829 744.5h2M831 745.5h2M833 746.5h2M835 747.5h2M837 748.5h2M839 749.5h2M841 750.5h1M842 750.5h2M844 751.5h4M848 752.5h1M849 752.5h4M853 753.5h3M856 753.5h7M863 753.5h7M870 753.5h4M874 752.5h3M877 752.5h4M881 751.5h3M884 751.5h4M888 750.5h3M891 750.5h2M893 749.5h4M897 748.5h1M898 748.5h2M900 747.5h2M902 746.5h2M904 745.5h1M905 745.5h1M906 744.5h2M908 743.5h2M910 742.5h2M912 741.5h1M913 740.5h2M915 739.5h1M916 738.5h1M917 737.5h2M919 736.5h1M920 735.5h2M922 734.5h1M923 733.5h1M924 732.5h2M926 731.5h1M927 730.5h2M929 729.5h1M930 728.5h1M931 727.5h2M933 726.5h1M934 725.5h2M936 724.5h2M938 723.5h2M940 722.5h2M942 721.5h4M946 720.5h1M947 720.5h4M951 719.5h3M954 719.5h2M956 718.5h2M958 717.5h2M960 716.5h1M961 716.5h1M962 715.5h2M964 714.5h2M966 713.5h2M968 712.5h1M969 711.5h2M971 710.5h1M972 709.5h1M973 708.5h2M975 707.5h1M976 706.5h1M977 705.5h1M978 704.5h2M980 703.5h1M981 702.5h1M982 701.5h1M983 700.5h2M985 699.5h1M986 698.5h1M987 697.5h2M989 696.5h2M991 695.5h2M993 694.5h2M995 693.5h1M996 693.5h2M998 692.5h4M1002 691.5h1M1003 691.5h2M1005 690.5h2M1007 689.5h2M1009 688.5h1M1010 688.5h2M1012 687.5h4M1016 686.5h1M1017 686.5h2M1019 685.5h4M1023 684.5h1M1024 684.5h2M1026 683.5h2M1028 682.5h2M1030 681.5h1M1031 681.5h1M1032 680.5h2M1034 679.5h2M1036 678.5h2M1038 677.5h1M1039 676.5h2M1041 675.5h1M1042 674.5h1M1043 673.5h2M1045 672.5h1M1046 671.5h2M1048 670.5h2M1050 669.5h2M1052 668.5h1M1053 667.5h2M1055 666.5h2M1057 665.5h2M1059 664.5h2M1061 663.5h2M1063 662.5h2M1065 661.5h1M1066 661.5h1M1067 660.5h2M1069 659.5h2M1071 658.5h2M1073 657.5h1M1074 656.5h2M1076 655.5h2M1078 654.5h2M1080 653.5h1M1081 652.5h2M1083 651.5h1M1084 650.5h1M1085 649.5h2M1087 648.5h1M1088 647.5h2M1090 646.5h2M1092 645.5h2M1094 644.5h1M1095 643.5h2M1097 642.5h1M1098 641.5h1M1099 640.5h2M1101 639.5h1M1102 638.5h2M1104 637.5h2M1106 636.5h2M1108 635.5h1M1109 634.5h2M1111 633.5h1M1112 632.5h1M1113 631.5h2M1115 630.5h2M1117 629.5h2M1119 628.5h2M1121 627.5h1M1122 627.5h1M1123 626.5h2M1125 625.5h2M1127 624.5h2M1129 623.5h1M1130 622.5h2M1132 621.5h2M1134 620.5h2M1136 619.5h1M1137 618.5h2M1139 617.5h2M1141 616.5h2M1143 615.5h2M1145 614.5h2M1147 613.5h2M1149 612.5h1M1150 612.5h4M1154 611.5h3" fill="none" stroke="#e6e620" stroke-width="1" shape-rendering="crispEdges"/>
<path d="M72.5 625v2M73.5 627v3M74.5 630v4M75.5 634v3M76.5 637v3M77.5 640v4M78.5 644v3M79.5 647v1M79.5 648v2M80.5 650v2M81.5 652v2M82.5 654v2M83.5 656v2M84.5 658v2M85.5 660v2M86.5 662v1M86 663.5h1M87 664.5h1M88 665.5h1M89 666.5h1M90 667.5h1M91 668.5h1M92 669.5h1M93.5 670v1M94.5 671v1M95.5 672v1M96.5 673v1M97.5 674v2M98.5 676v1M99.5 677v1M100 678.5h1M101 679.5h2M103 680.5h2M105 681.5h2M107 682.5h2M109 681.5h4M113 680.5h1M114 680.5h4M118 681.5h3M121 681.5h1M122 680.5h2M124 679.5h1M125 678.5h1M126 677.5h2M128 676.5h2M130 675.5h2M132 674.5h2M134 673.5h1M135.5 673v1M136.5 672v1M137.5 671v1M138.5 670v1M139.5 668v2M140.5 667v1M141.5 666v1M142.5 665v1M143.5 666v2M144.5 668v2M145.5 670v2M146.5 672v2M147.5 674v2M148.5 676v2M149.5 678v1M149 679.5h1M150 680.5h2M152 681.5h1M153 682.5h1M154 683.5h2M156.5 684v1M157.5 685v1M158.5 686v2M159.5 688v1M160.5 689v1M161.5 690v2M162.5 692v1M163 693.5h4M167 694.5h3M170 694.5h2M172 693.5h4M176 692.5h1M177 692.5h7M184 692.5h2M186 691.5h4M190 690.5h1M191 690.5h2M193 689.5h2M195 688.5h2M197 687.5h1M198 687.5h2M200 688.5h2M202 689.5h2M204 690.5h1M205 690.5h1M206 691.5h2M208 692.5h1M209 693.5h1M210 694.5h2M212 695.5h2M214 694.5h4M218 693.5h1M219 693.5h2M221 692.5h4M225 691.5h1M226 691.5h2M228 690.5h2M230 689.5h2M232 688.5h1M233.5 688v1M234.5 687v1M235.5 685v2M236.5 684v1M237.5 683v1M238.5 681v2M239.5 680v1M240.5 679v1M241.5 677v2M242.5 676v1M243.5 675v1M244.5 673v2M245.5 672v1M246.5 670v2M247.5 669v1M248.5 668v1M249.5 667v1M250.5 666v1M251.5 664v2M252.5 663v1M253.5 662v1M254 661.5h1M255 660.5h2M257 659.5h1M258 658.5h1M259 657.5h2M261 656.5h1M262 655.5h1M263 654.5h1M264 653.5h2M266 652.5h1M267 651.5h1M268.5 650v1M269.5 649v1M270.5 647v2M271.5 646v1M272.5 645v1M273.5 643v2M274.5 642v1M275.5 641v1M276.5 640v1M277.5 638v2M278.5 637v1M279.5 636v1M280.5 634v2M281.5 633v1M282 632.5h1M283 631.5h1M284 630.5h1M285 629.5h1M286 628.5h1M287 627.5h1M288 626.5h1M289 625.5h1M290 624.5h1M291 623.5h1M292 622.5h2M294 621.5h1M295 620.5h1M296 619.5h4M300 618.5h3M303 618.5h1M304 617.5h2M306 616.5h1M307 615.5h1M308 614.5h2M310 613.5h1M311 612.5h1M312 611.5h1M313 610.5h2M315 609.5h1M316 608.5h1M317 607.5h1M318 606.5h2M320 605.5h1M321 604.5h1M322 603.5h2M324 602.5h1M325 601.5h1M326 600.5h1M327 599.5h2M329 598.5h1M330 597.5h1M331 596.5h2M333 595.5h2M335 594.5h2M337 593.5h1M338 593.5h4M342 592.5h3M345 592.5h1M346 591.5h2M348 590.5h2M350 589.5h2M352 588.5h1M353 587.5h2M355 586.5h2M357 585.5h2M359 584.5h1M360 583.5h1M361 582.5h1M362 581.5h1M363 580.5h1M364 579.5h1M365 578.5h1M366 577.5h1M367 576.5h1M368 575.5h1M369 574.5h2M371 573.5h1M372 572.5h1M373 571.5h4M377 570.5h3M380 570.5h4M384 569.5h3M387 569.5h4M391 570.5h3M394.5 570v1M395.5 571v1M396.5 572v1M397.5 573v1M398.5 574v2M399.5 576v1M400.5 577v1M401.5 578v1M402.5 579v2M403.5 581v2M404.5 583v2M405.5 585v2M406.5 587v2M407.5 589v2M408.5 591v2M409.5 593v2M410.5 595v2M411.5 597v2M412.5 599v2M413.5 601v2M414.5 603v2M415.5 605v1M415.5 606v2M416.5 608v2M417.5 610v2M418.5 612v2M419.5 614v3M420.5 617v2M421.5 619v2M422.5 621v1M422.5 622v1M423.5 623v2M424.5 625v1M425.5 626v2M426.5 628v2M427.5 630v1M428.5 631v2M429.5 633v2M430.5 635v2M431.5 637v3M432.5 640v2M433.5 642v3M434.5 645v3M435.5 648v2M436.5 650v1M436.5 651v2M437.5 653v2M438.5 655v2M439.5 657v2M440.5 659v2M441.5 661v2M442.5 663v2M443.5 665v1M443.5 666v2M444.5 668v2M445.5 670v2M446.5 672v2M447.5 674v2M448.5 676v2M449.5 678v2M450.5 680v1M450 681.5h1M451 682.5h2M453 683.5h1M454 684.5h1M455 685.5h2M457 686.5h1M458 687.5h1M459 688.5h1M460 689.5h2M462 690.5h1M463 691.5h1M464.5 692v1M465.5 690v2M466.5 689v1M467.5 687v2M468.5 685v2M469.5 684v1M470.5 682v2M471.5 681v1M472.5 679v2M473.5 677v2M474.5 675v2M475.5 673v2M476.5 671v2M477.5 669v2M478.5 668v1M479.5 667v1M480.5 665v2M481.5 664v1M482.5 663v1M483.5 661v2M484.5 660v1M485 659.5h1M486 658.5h2M488 657.5h2M490 656.5h2M492 655.5h2M494 654.5h2M496 653.5h2M498 652.5h1M499 652.5h2M501 651.5h2M503 650.5h2M505 649.5h1M506 649.5h2M508 648.5h2M510 647.5h2M512 646.5h1M513 646.5h7M520 646.5h1M521 645.5h2M523 644.5h2M525 643.5h2M527 642.5h1M528 641.5h2M530 640.5h1M531 639.5h1M532 638.5h2M534 637.5h1M535 636.5h2M537 635.5h1M538 634.5h1M539 633.5h2M541 632.5h1M542 631.5h2M544 630.5h2M546 629.5h2M548 628.5h7M555 628.5h1M556 629.5h1M557 630.5h1M558 631.5h1M559 632.5h1M560 633.5h1M561 634.5h1M562 635.5h1M563 636.5h1M564 637.5h1M565 638.5h2M567 639.5h1M568 640.5h1M569 641.5h2M571 642.5h4M575 643.5h1M576 643.5h4M580 644.5h3M583 644.5h7M590 644.5h7M597.5 644v1M598.5 645v1M599.5 646v1M600.5 647v1M601.5 648v2M602.5 650v1M603.5 651v1M604 652.5h4M608 653.5h3M611 653.5h2M613 654.5h4M617 655.5h1M618.5 655v1M619.5 656v1M620.5 657v2M621.5 659v1M622.5 660v1M623.5 661v2M624.5 663v1M625.5 664v2M626.5 666v4M627.5 670v3M628.5 673v4M629.5 677v4M630.5 681v3M631.5 684v4M632.5 688v1M632.5 689v2M633.5 691v3M634.5 694v4M635.5 698v3M636.5 701v3M637.5 704v4M638.5 708v3M639.5 711v1M639.5 712v2M640.5 714v2M641.5 716v3M642.5 719v2M643.5 721v2M644.5 723v3M645.5 726v2M646.5 728v1M646.5 729v2M647.5 731v3M648.5 734v3M649.5 737v3M650.5 740v4M651.5 744v3M652.5 747v3M653.5 750v1M653 751.5h1M654 752.5h1M655 753.5h1M656 754.5h1M657 755.5h1M658 756.5h1M659 757.5h1M660 758.5h7M667 758.5h2M669 757.5h2M671 756.5h2M673 755.5h1M674 755.5h2M676 754.5h4M680 753.5h1M681 753.5h2M683 752.5h4M687 751.5h1M688 751.5h4M692 752.5h3M695 752.5h1M696 753.5h2M698 754.5h2M700 755.5h2M702 756.5h7M709 756.5h1M710 755.5h2M712 754.5h2M714 753.5h2M716 752.5h1M717 751.5h2M719 750.5h2M721 749.5h2M723 748.5h1M724 747.5h1M725 746.5h1M726 745.5h2M728 744.5h1M729 743.5h1M730 742.5h2M732 743.5h2M734 744.5h2M736 745.5h1M737 745.5h4M741 744.5h3M744 744.5h4M748 743.5h3M751.5 743v1M752.5 741v2M753.5 740v1M754.5 738v2M755.5 736v2M756.5 735v1M757.5 733v2M758.5 732v1M759.5 731v1M760.5 729v2M761.5 728v1M762.5 727v1M763.5 725v2M764.5 724v1M765 723.5h1M766 722.5h1M767 721.5h1M768 720.5h1M769 719.5h1M770 718.5h1M771 717.5h1M772 716.5h1M773 715.5h2M775 714.5h2M777 713.5h2M779 712.5h1M780 713.5h2M782 714.5h2M784 715.5h2M786.5 716v1M787.5 717v1M788.5 718v2M789.5 720v1M790.5 721v1M791.5 722v2M792.5 724v1M793.5 725v1M794.5 726v1M795.5 727v1M796.5 728v1M797.5 729v2M798.5 731v1M799.5 732v1M800 733.5h1M801 734.5h1M802 735.5h1M803 736.5h2M805 737.5h1M806 738.5h1M807.5 739v1M808.5 740v1M809.5 741v1M810.5 742v1M811.5 743v2M812.5 745v1M813.5 746v1M814.5 747v1M815.5 748v2M816.5 750v1M817.5 751v1M818.5 752v2M819.5 754v1M820.5 755v2M821 757.5h1M822 758.5h2M824 759.5h2M826 760.5h2M828 761.5h2M830 762.5h4M834 763.5h1M835 763.5h7M842 763.5h2M844 762.5h2M846 761.5h2M848 760.5h1M849 760.5h2M851 759.5h4M855 758.5h1M856 758.5h1M857 757.5h2M859 756.5h1M860 755.5h1M861 754.5h2M863 753.5h4M867 752.5h3M870 752.5h2M872 751.5h2M874 750.5h2M876 749.5h1M877 749.5h4M881 748.5h3M884 748.5h7M891.5 748v1M892.5 747v1M893.5 746v1M894.5 745v1M895.5 743v2M896.5 742v1M897.5 741v1M898 740.5h1M899 739.5h1M900 738.5h1M901 737.5h1M902 736.5h1M903 735.5h1M904 734.5h1M905.5 733v1M906.5 732v1M907.5 730v2M908.5 729v1M909.5 728v1M910.5 726v2M911.5 725v1M912 724.5h1M913 723.5h1M914 722.5h1M915 721.5h2M917 720.5h1M918 719.5h1M919 718.5h1M920 717.5h1M921 716.5h1M922 715.5h1M923 714.5h1M924 713.5h1M925 712.5h1M926 711.5h1M927 710.5h2M929 709.5h1M930 708.5h1M931 707.5h2M933 706.5h2M935 705.5h4M939 704.5h1M940.5 704v1M941.5 705v1M942.5 706v2M943.5 708v1M944.5 709v1M945.5 710v2M946.5 712v1M947 713.5h7M954.5 713v1M955.5 712v1M956.5 711v1M957.5 710v1M958.5 708v2M959.5 707v1M960.5 706v1M961.5 705v1M962.5 703v2M963.5 702v1M964.5 700v2M965.5 698v2M966.5 697v1M967.5 695v2M968 694.5h1M969 693.5h1M970 692.5h1M971 691.5h1M972 690.5h1M973 689.5h1M974 688.5h1M975 687.5h1M976 686.5h1M977 685.5h1M978 684.5h1M979 683.5h1M980 682.5h1M981 681.5h1M982 680.5h2M984 679.5h2M986 678.5h2M988 677.5h1M989 677.5h2M991 678.5h4M995 679.5h1M996 679.5h2M998 680.5h4M1002 681.5h1M1003 681.5h4M1007 680.5h3M1010 680.5h2M1012 679.5h4M1016 678.5h1M1017 678.5h1M1018 677.5h2M1020 676.5h1M1021 675.5h1M1022 674.5h2M1024 673.5h1M1025 672.5h2M1027 671.5h2M1029 670.5h2M1031.5 669v1M1032.5 668v1M1033.5 667v1M1034.5 666v1M1035.5 664v2M1036.5 663v1M1037.5 662v1M1038 661.5h1M1039 660.5h1M1040 659.5h1M1041 658.5h2M1043 657.5h1M1044 656.5h1M1045 655.5h2M1047 654.5h2M1049 653.5h2M1051 652.5h1M1052 652.5h1M1053 651.5h2M1055 650.5h2M1057 649.5h2M1059 648.5h7M1066 648.5h1M1067 647.5h1M1068 646.5h1M1069 645.5h2M1071 644.5h1M1072 643.5h1M1073 642.5h1M1074 641.5h1M1075 640.5h1M1076 639.5h2M1078 638.5h1M1079 637.5h1M1080 636.5h1M1081 635.5h1M1082 634.5h1M1083 633.5h1M1084 632.5h1M1085 631.5h1M1086 630.5h1M1087 629.5h2M1089 628.5h2M1091 627.5h2M1093 626.5h1M1094 626.5h1M1095 625.5h1M1096 624.5h1M1097 623.5h2M1099 622.5h1M1100 621.5h1M1101 620.5h2M1103 619.5h2M1105 618.5h2M1107 617.5h1M1108 617.5h2M1110 616.5h2M1112 615.5h2M1114 614.5h1M1115 614.5h2M1117 613.5h4M1121 612.5h1M1122 612.5h1M1123 611.5h2M1125 610.5h1M1126 609.5h1M1127 608.5h2M1129 607.5h2M1131 606.5h2M1133 605.5h2M1135 604.5h1M1136 604.5h1M1137 603.5h2M1139 602.5h2M1141 601.5h2M1143 600.5h4M1147 601.5h3M1150 601.5h1M1151 602.5h1M1152 603.5h1M1153 604.5h2M1155 605.5h1M1156 606.5h1" fill="none" stroke="#ffffff" stroke-width="1" shape-rendering="crispEdges"/>
<text x="13" y="22.3" textLength="52" lengthAdjust="spacing">101.0015</text>
<text x="1190" y="22.3" textLength="52" lengthAdjust="spacing">101.0015</text>
<text x="13" y="80.3" textLength="52" lengthAdjust="spacing">100.6004</text>
<text x="1190" y="80.3" textLength="52" lengthAdjust="spacing">100.6004</text>
<text x="13" y="139.3" textLength="52" lengthAdjust="spacing">100.1993</text>
<text x="1190" y="139.3" textLength="52" lengthAdjust="spacing">100.1993</text>
<text x="20" y="198.3" textLength="45" lengthAdjust="spacing">99.7982</text>
<text x="1190" y="198.3" textLength="45" lengthAdjust="spacing">99.7982</text>
<text x="20" y="257.3" textLength="45" lengthAdjust="spacing">99.3971</text>
<text x="1190" y="257.3" textLength="45" lengthAdjust="spacing">99.3971</text>
<text x="20" y="315.3" textLength="45" lengthAdjust="spacing">98.9960</text>
<text x="1190" y="315.3" textLength="45" lengthAdjust="spacing">98.9960</text>
<text x="20" y="374.3" textLength="45" lengthAdjust="spacing">98.5949</text>
<text x="1190" y="374.3" textLength="45" lengthAdjust="spacing">98.5949</text>
<text x="20" y="433.3" textLength="45" lengthAdjust="spacing">98.1938</text>
<text x="1190" y="433.3" textLength="45" lengthAdjust="spacing">98.1938</text>
<text x="20" y="492.3" textLength="45" lengthAdjust="spacing">97.7927</text>
<text x="1190" y="492.3" textLength="45" lengthAdjust="spacing">97.7927</text>
<text x="27" y="573.3" textLength="38" lengthAdjust="spacing">0.2297</text>
<text x="1190" y="573.3" textLength="38" lengthAdjust="spacing">0.2297</text>
<text x="27" y="597.3" textLength="38" lengthAdjust="spacing">0.1625</text>
<text x="1190" y="597.3" textLength="38" lengthAdjust="spacing">0.1625</text>
<text x="27" y="621.3" textLength="38" lengthAdjust="spacing">0.0954</text>
<text x="1190" y="621.3" textLength="38" lengthAdjust="spacing">0.0954</text>
<text x="27" y="646.3" textLength="38" lengthAdjust="spacing">0.0282</text>
<text x="1190" y="646.3" textLength="38" lengthAdjust="spacing">0.0282</text>
<text x="23" y="670.3" textLength="42" lengthAdjust="spacing">-0.0389</text>
<text x="1190" y="670.3" textLength="42" lengthAdjust="spacing">-0.0389</text>
<text x="23" y="694.3" textLength="42" lengthAdjust="spacing">-0.1061</text>
<text x="1190" y="694.3" textLength="42" lengthAdjust="spacing">-0.1061</text>
<text x="23" y="719.3" textLength="42" lengthAdjust="spacing">-0.1732</text>
<text x="1190" y="719.3" textLength="42" lengthAdjust="spacing">-0.1732</text>
<text x="23" y="743.3" textLength="42" lengthAdjust="spacing">-0.2404</text>
<text x="1190" y="743.3" textLength="42" lengthAdjust="spacing">-0.2404</text>
<rect x="1187.5" y="370.5" width="68" height="17" fill="#000" stroke="#f09632" stroke-width="1" shape-rendering="crispEdges"/>
<rect x="1247" y="362" width="9" height="9" fill="#000"/>
<path d="M1247 366.5L1251.5 362L1256 366.5zM1247 370.5L1251.5 366L1256 370.5z" fill="#f09632" shape-rendering="crispEdges"/>
<text x="1190.3" y="383" style="fill:#f08a28">98.6041</text>
<text x="70.5" y="11">美元指数</text>
<text x="116.6" y="11" style="fill:#f56e10"><tspan style="font-weight:bold">【</tspan><tspan x="130.3" textLength="21.1" lengthAdjust="spacingAndGlyphs">240</tspan><tspan x="151.2">分</tspan><tspan x="164.2" style="font-weight:bold">】</tspan></text>
<g stroke="#f56e10" fill="none" stroke-width="1"><circle cx="180.2" cy="8.6" r="4"/><path d="M176 8.6H184.4M180.2 4.4V12.8"/></g>
<g shape-rendering="crispEdges"><rect x="193" y="0" width="10" height="10" fill="#fff"/><rect x="192" y="0" width="1" height="11" fill="#00008c"/><rect x="203" y="0" width="1" height="11" fill="#00008c"/><rect x="192" y="10" width="12" height="1" fill="#00008c"/><rect x="204" y="0" width="1" height="11" fill="#a8a89c"/><rect x="193" y="11" width="11" height="1" fill="#a8a89c"/><rect x="193" y="5" width="1" height="1" fill="#ff0000"/><rect x="193" y="8" width="1" height="1" fill="#0000ff"/><rect x="194" y="4" width="1" height="1" fill="#ff0000"/><rect x="194" y="7" width="1" height="1" fill="#0000ff"/><rect x="195" y="3" width="1" height="1" fill="#ff0000"/><rect x="195" y="6" width="1" height="1" fill="#0000ff"/><rect x="196" y="2" width="1" height="1" fill="#ff0000"/><rect x="196" y="5" width="1" height="1" fill="#0000ff"/><rect x="196" y="1" width="1" height="1" fill="#ff0000"/><rect x="196" y="4" width="1" height="1" fill="#0000ff"/><rect x="197" y="2" width="1" height="1" fill="#ff0000"/><rect x="197" y="5" width="1" height="1" fill="#0000ff"/><rect x="198" y="3" width="1" height="1" fill="#ff0000"/><rect x="198" y="6" width="1" height="1" fill="#0000ff"/><rect x="199" y="4" width="1" height="1" fill="#ff0000"/><rect x="199" y="7" width="1" height="1" fill="#0000ff"/><rect x="200" y="3" width="1" height="1" fill="#ff0000"/><rect x="200" y="6" width="1" height="1" fill="#0000ff"/><rect x="201" y="2" width="1" height="1" fill="#ff0000"/><rect x="201" y="5" width="1" height="1" fill="#0000ff"/><rect x="202" y="2" width="1" height="1" fill="#ff0000"/><rect x="202" y="5" width="1" height="1" fill="#0000ff"/></g>
<text x="207.2" y="11" textLength="63.5" lengthAdjust="spacingAndGlyphs" style="fill:#fff">BOLL(26,2)</text>
<text x="273.2" y="11" textLength="73.1" lengthAdjust="spacingAndGlyphs" style="fill:#fff">MID:98.4620</text>
<text x="354.4" y="11" textLength="83.8" lengthAdjust="spacingAndGlyphs" style="fill:#c8c81e">UPPER:98.9591</text>
<text x="448.4" y="11" textLength="90.7" lengthAdjust="spacingAndGlyphs" style="fill:#e628e6">LOWER:97.9648</text>
<g shape-rendering="crispEdges"><rect x="543" y="0" width="10" height="10" fill="#fff"/><rect x="542" y="0" width="1" height="11" fill="#00008c"/><rect x="553" y="0" width="1" height="11" fill="#00008c"/><rect x="542" y="10" width="12" height="1" fill="#00008c"/><rect x="554" y="0" width="1" height="11" fill="#a8a89c"/><rect x="543" y="11" width="11" height="1" fill="#a8a89c"/><rect x="543" y="5" width="1" height="1" fill="#ff0000"/><rect x="543" y="8" width="1" height="1" fill="#0000ff"/><rect x="544" y="4" width="1" height="1" fill="#ff0000"/><rect x="544" y="7" width="1" height="1" fill="#0000ff"/><rect x="545" y="3" width="1" height="1" fill="#ff0000"/><rect x="545" y="6" width="1" height="1" fill="#0000ff"/><rect x="546" y="2" width="1" height="1" fill="#ff0000"/><rect x="546" y="5" width="1" height="1" fill="#0000ff"/><rect x="546" y="1" width="1" height="1" fill="#ff0000"/><rect x="546" y="4" width="1" height="1" fill="#0000ff"/><rect x="547" y="2" width="1" height="1" fill="#ff0000"/><rect x="547" y="5" width="1" height="1" fill="#0000ff"/><rect x="548" y="3" width="1" height="1" fill="#ff0000"/><rect x="548" y="6" width="1" height="1" fill="#0000ff"/><rect x="549" y="4" width="1" height="1" fill="#ff0000"/><rect x="549" y="7" width="1" height="1" fill="#0000ff"/><rect x="550" y="3" width="1" height="1" fill="#ff0000"/><rect x="550" y="6" width="1" height="1" fill="#0000ff"/><rect x="551" y="2" width="1" height="1" fill="#ff0000"/><rect x="551" y="5" width="1" height="1" fill="#0000ff"/><rect x="552" y="2" width="1" height="1" fill="#ff0000"/><rect x="552" y="5" width="1" height="1" fill="#0000ff"/></g>
<text x="557.3" y="11" textLength="77.3" lengthAdjust="spacingAndGlyphs" style="fill:#fff">MA1(0,0,0,50)</text>
<text x="641.0" y="11" textLength="72.4" lengthAdjust="spacingAndGlyphs" style="fill:#fff">MA0:98.6041</text>
<text x="723.4" y="11" textLength="72.7" lengthAdjust="spacingAndGlyphs" style="fill:#c8c81e">MA0:98.6041</text>
<text x="806.5" y="11" textLength="73.1" lengthAdjust="spacingAndGlyphs" style="fill:#e628e6">MA0:98.6041</text>
<text x="889.8" y="11" textLength="80.5" lengthAdjust="spacingAndGlyphs" style="fill:#20c820">MA50:98.2993</text>
<rect x="1124.5" y="-1.5" width="13" height="13" fill="#0a0a0a" stroke="#bcbcbc" shape-rendering="crispEdges"/>
<rect x="1140.5" y="-1.5" width="13" height="13" fill="#0a0a0a" stroke="#bcbcbc" shape-rendering="crispEdges"/>
<rect x="1156.5" y="-1.5" width="13" height="13" fill="#0a0a0a" stroke="#bcbcbc" shape-rendering="crispEdges"/>
<rect x="1172.5" y="-1.5" width="13" height="13" fill="#0a0a0a" stroke="#bcbcbc" shape-rendering="crispEdges"/>
<g stroke="#c8c8c8" fill="none" stroke-width="1" shape-rendering="crispEdges"><path d="M1126 5H1129M1130 5H1132M1133 5H1136M1131 0V3M1131 4V6M1131 7V10" stroke-width="2"/><path d="M1143.5 0V10M1142 8.5H1152M1146.5 1V7"/><path d="M1159.5 0V10M1158 8.5H1168"/><path d="M1174.5 0V9.5H1177.5V0"/><path d="M1177 4.5H1181" stroke-width="2"/></g>
<path d="M1147.5 3.8L1150.5 1V6.5zM1142.2 1.5L1143.5 0L1144.8 1.5zM1158.2 1.5L1159.5 0L1160.8 1.5zM1150.5 7.2L1152.3 8.5L1150.5 9.8zM1143.5 7.2L1141.7 8.5L1143.5 9.8zM1166.5 7.2L1168.3 8.5L1166.5 9.8zM1159.5 7.2L1157.7 8.5L1159.5 9.8zM1162.3 1L1167 4L1162.3 7zM1180.5 2L1183.5 4.5L1180.5 7z" fill="#c8c8c8"/>
<text x="70.2" y="562" textLength="85.3" lengthAdjust="spacingAndGlyphs" style="fill:#fff">MACD(26,12,9)</text>
<text x="160.5" y="562" textLength="64.5" lengthAdjust="spacingAndGlyphs" style="fill:#fff">DIFF:0.1263</text>
<text x="234.5" y="562" textLength="64.2" lengthAdjust="spacingAndGlyphs" style="fill:#c8c81e">DEA:0.1138</text>
<text x="307.2" y="562" textLength="77.8" lengthAdjust="spacingAndGlyphs" style="fill:#e628e6">MACD:0.0248</text>
<g><path d="M6.5 548v2M6.5 560v2M0 554.5h2M12 554.5h2.2M1 549l2 2M13 549l-2 2M1 561l2-2M13 561l-2-2" stroke="#ff0000" stroke-width="1.3" fill="none"/><circle cx="7" cy="554.9" r="4.4" fill="#000"/><circle cx="7" cy="554.9" r="3.3" fill="#fff"/><circle cx="7" cy="554.9" r="2.1" fill="#ff0000"/></g>
<text x="8.2" y="779" class="b" style="fill:#ff6e00">240<tspan x="29.3" y="779.5">分</tspan><tspan x="43.4" y="778" style="font-family:'DejaVu Sans',sans-serif;font-size:10.8px;font-weight:normal"> ▲</tspan></text>
<text x="74" y="777" class="b">03/20</text>
<text x="242" y="777" class="b">03/26</text>
<text x="410" y="777" class="b">04/01</text>
<text x="578" y="777" class="b">04/07</text>
<text x="746" y="777" class="b">04/11</text>
<text x="914" y="777" class="b">04/17</text>
<text x="1082" y="777" class="b">04/23</text>
</svg></body></html>
